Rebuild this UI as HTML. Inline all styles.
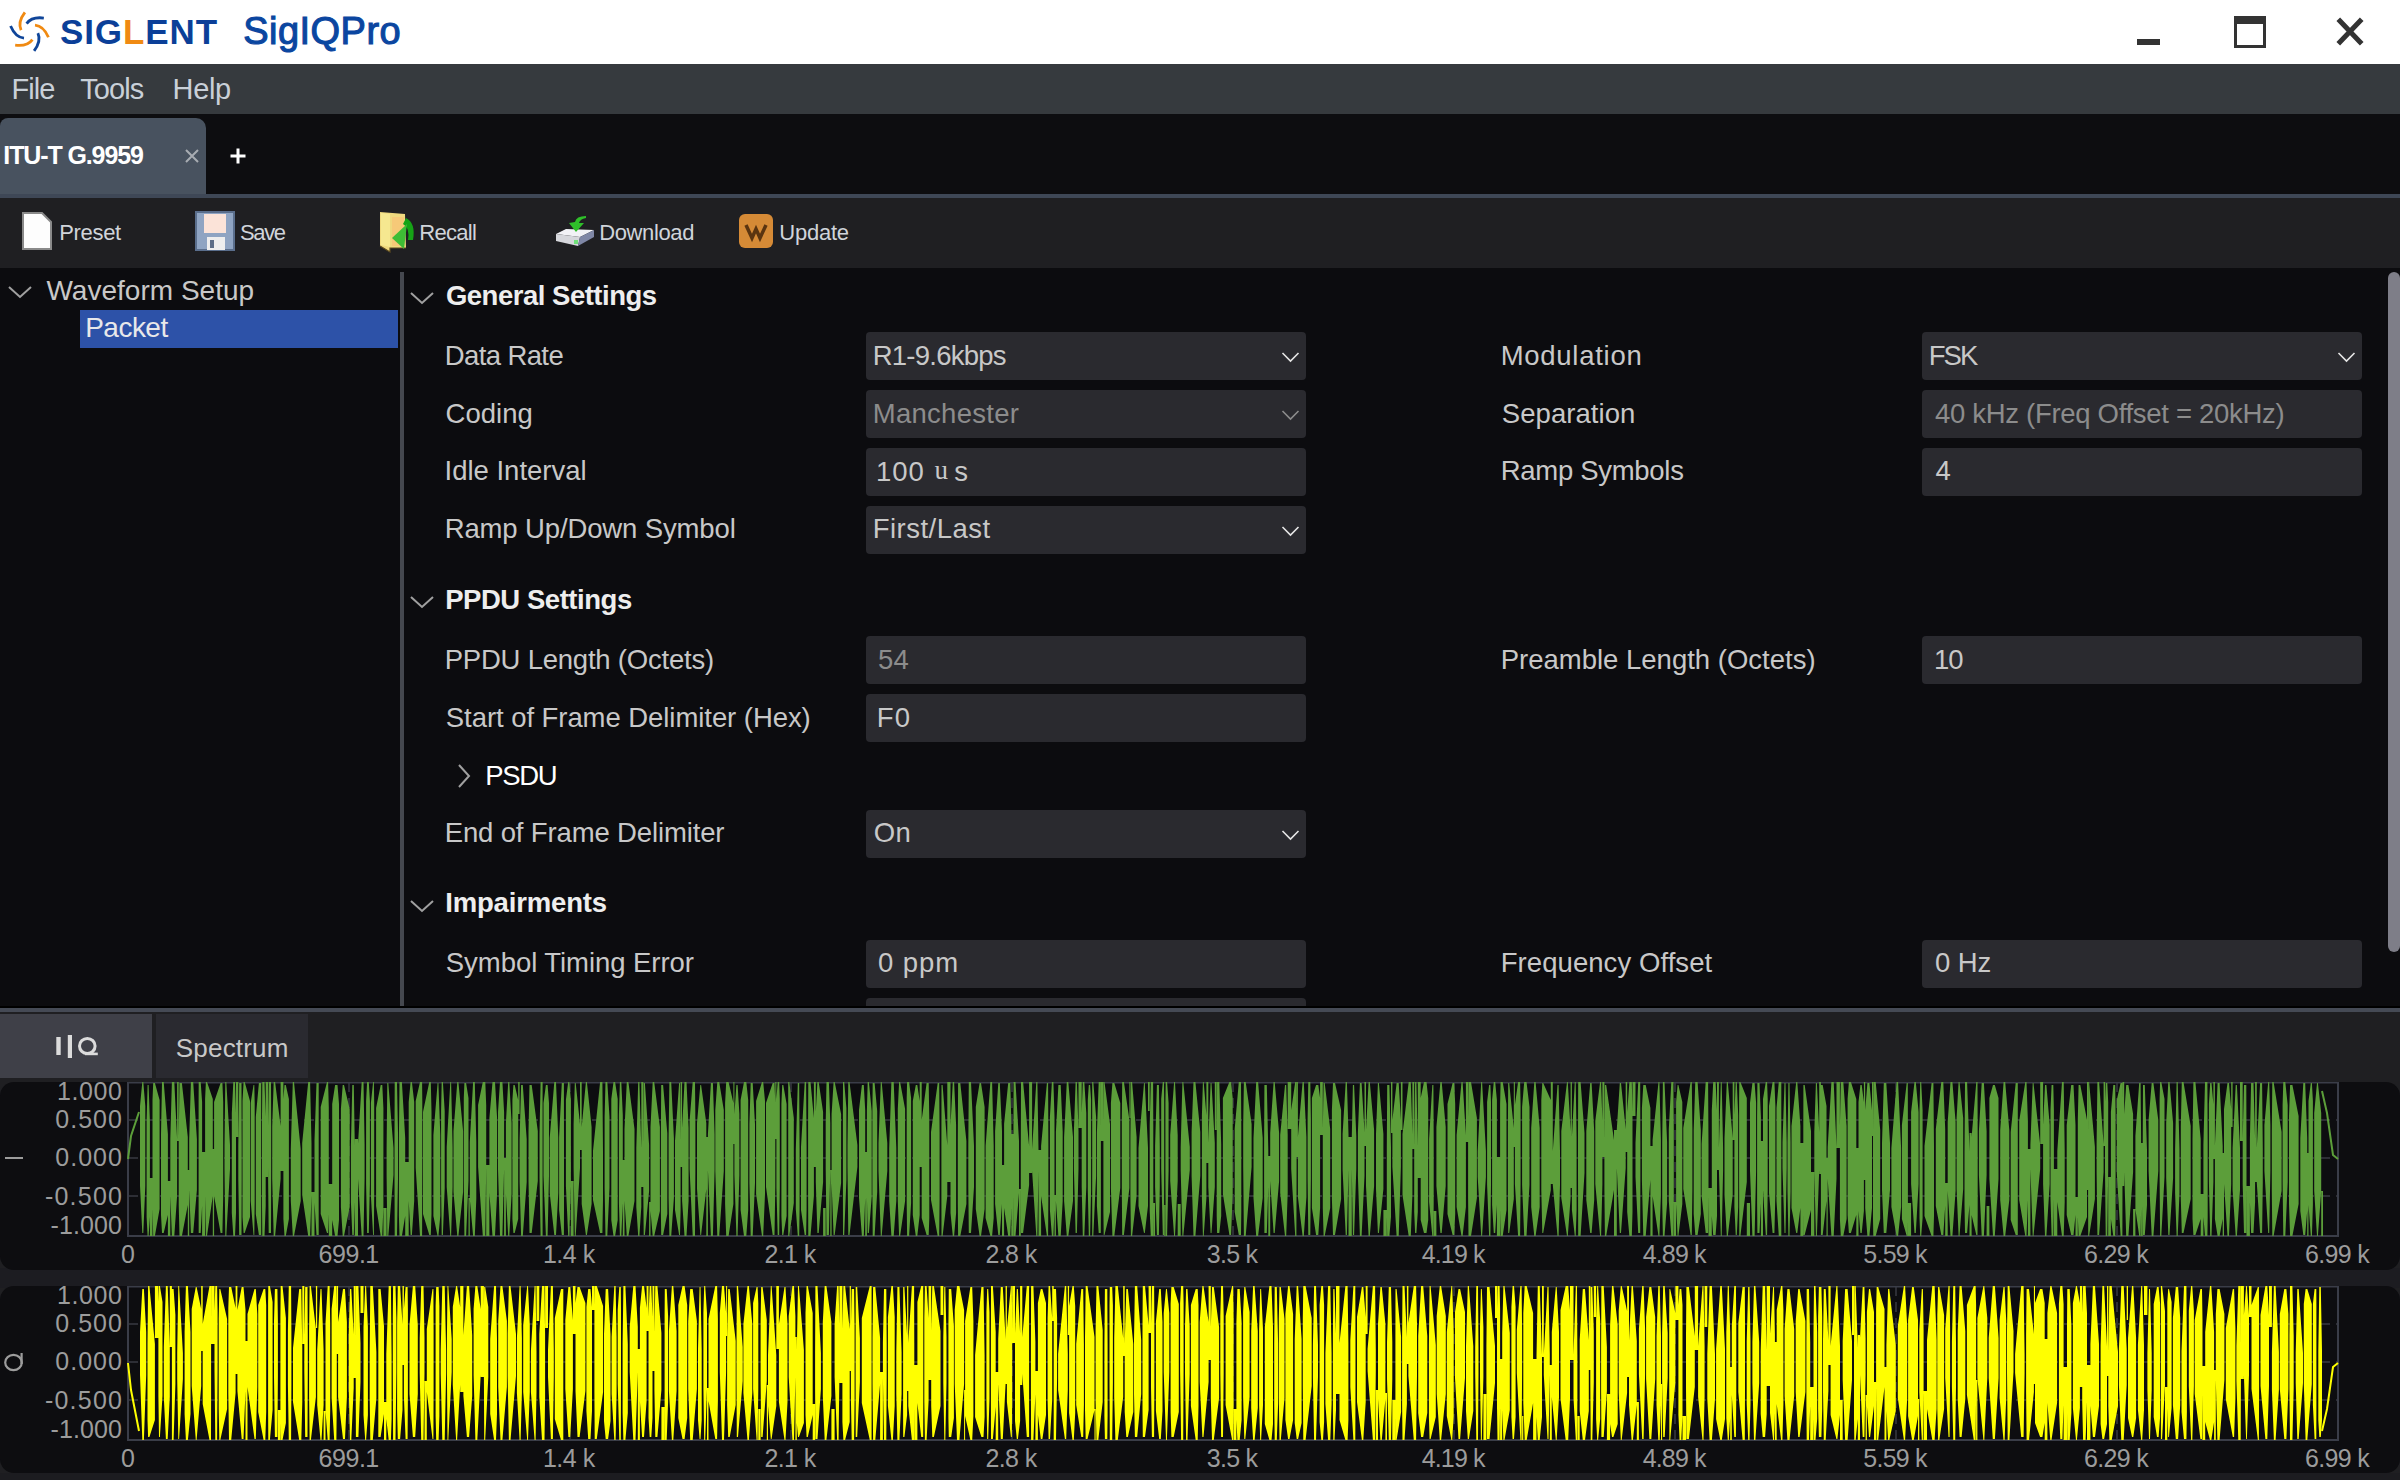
<!DOCTYPE html><html><head><meta charset="utf-8"><style>
html,body{margin:0;padding:0;width:2400px;height:1480px;overflow:hidden;background:#0c0c0f;}
body{position:relative;font-family:"Liberation Sans",sans-serif;}
.t{position:absolute;white-space:pre;}
.r{position:absolute;}
svg{position:absolute;left:0;top:0;}
</style></head><body>
<div class="r" style="left:0px;top:0px;width:2400px;height:64px;background:#ffffff;"></div>
<svg width="64" height="64" style="left:0;top:0"><g transform="translate(29.5,31.6)"><path d="M -8.4 -1.5 Q -12 -9.4 -4.6 -19.2" transform="rotate(0)" stroke="#f08a12" stroke-width="2.8" fill="none" stroke-linecap="butt"/><path d="M -8.4 -1.5 Q -12 -9.4 -4.6 -19.2" transform="rotate(60)" stroke="#0f4599" stroke-width="2.8" fill="none" stroke-linecap="butt"/><path d="M -8.4 -1.5 Q -12 -9.4 -4.6 -19.2" transform="rotate(120)" stroke="#f08a12" stroke-width="2.8" fill="none" stroke-linecap="butt"/><path d="M -8.4 -1.5 Q -12 -9.4 -4.6 -19.2" transform="rotate(180)" stroke="#0f4599" stroke-width="2.8" fill="none" stroke-linecap="butt"/><path d="M -8.4 -1.5 Q -12 -9.4 -4.6 -19.2" transform="rotate(240)" stroke="#f08a12" stroke-width="2.8" fill="none" stroke-linecap="butt"/><path d="M -8.4 -1.5 Q -12 -9.4 -4.6 -19.2" transform="rotate(300)" stroke="#0f4599" stroke-width="2.8" fill="none" stroke-linecap="butt"/></g></svg>
<div class="t" style="left:60px;top:14.4px;font-size:35px;line-height:35px;font-weight:bold;letter-spacing:0.9px;color:#0b3f98">SIG<span style="color:#f08a12">L</span>ENT</div>
<div class="t" style="left:243.3px;top:11.8px;font-size:38px;line-height:38px;color:#0b46a0;letter-spacing:0.45px;-webkit-text-stroke:1.1px #0b46a0;">SigIQPro</div>
<div class="r" style="left:2137px;top:39px;width:23px;height:6px;background:#333333;"></div>
<div class="r" style="left:2234px;top:16px;width:26px;height:21px;border:3px solid #333;border-top-width:8px;"></div>
<svg width="2400" height="64" style="left:0;top:0"><path d="M2340 21 L2360 42 M2360 21 L2340 42" stroke="#333" stroke-width="5" stroke-linecap="square"/></svg>
<div class="r" style="left:0px;top:64px;width:2400px;height:50px;background:#363a3e;"></div>
<div class="t" style="left:11.6px;top:75.4px;font-size:29px;line-height:29px;color:#c9d0d8;letter-spacing:-1.02px;">File</div>
<div class="t" style="left:80.3px;top:75.4px;font-size:29px;line-height:29px;color:#c9d0d8;letter-spacing:-0.93px;">Tools</div>
<div class="t" style="left:172.6px;top:75.4px;font-size:29px;line-height:29px;color:#c9d0d8;letter-spacing:-0.35px;">Help</div>
<div class="r" style="left:0px;top:114px;width:2400px;height:80px;background:#0d0d10;"></div>
<div class="r" style="left:0px;top:118px;width:206px;height:76px;background:#48525f;border-radius:8px 10px 0 0;"></div>
<div class="t" style="left:3.3px;top:143.0px;font-size:25px;line-height:25px;color:#ffffff;font-weight:bold;letter-spacing:-1.11px;">ITU-T G.9959</div>
<svg width="2400" height="200" style="left:0;top:0"><path d="M186 150 L198 162 M198 150 L186 162" stroke="#a8acb2" stroke-width="2"/><path d="M230.5 156 L245.5 156 M238 148.5 L238 163.5" stroke="#ffffff" stroke-width="3"/></svg>
<div class="r" style="left:0px;top:194px;width:2400px;height:4px;background:#3e4756;"></div>
<div class="r" style="left:0px;top:198px;width:2400px;height:70px;background:#1f1f22;"></div>
<svg width="2400" height="270" style="left:0;top:0"><path d="M23 213 L42 213 L51 222 L51 249 L23 249 Z" fill="#fdfdfd" stroke="#8a8a8a" stroke-width="2"/><rect x="196" y="212" width="38" height="38" fill="#8fa4c2"/><rect x="196" y="212" width="38" height="38" fill="none" stroke="#5a6e8c" stroke-width="2"/><rect x="204" y="214" width="22" height="19" fill="#fbe3d8"/><rect x="207" y="237" width="18" height="13" fill="#eeeeee"/><rect x="210" y="240" width="4" height="8" fill="#5d6e88"/><path d="M380 212 L405 214 L406 248 L390 248 L390 252 L380 246 Z" fill="#efd97e"/><path d="M381 213 L390 214 L390 247 L381 245 Z" fill="#f6e890"/><path d="M392 217 L404 217 L404 246 L392 246 Z" fill="#f6c978"/><path d="M380 246 L390 252 L390 248 L406 248" stroke="#5d4b20" stroke-width="1.2" fill="none"/><path d="M406 218 Q416 223 413 240 L408 240 Q410 228 403 224 Z" fill="#16a316"/><path d="M392 238 L407 224 L404 249 Z" fill="#3ebd35"/><path d="M556 234 L566 229 L594 230 L580 237 Z" fill="#f2f2f6"/><path d="M556 234 L580 237 L578 246 L556 241 Z" fill="#d6d7dc"/><path d="M580 237 L594 230 L594 237 L578 246 Z" fill="#7f87a6"/><rect x="574" y="240" width="4" height="4" fill="#70e07a"/><path d="M586 216 Q576 216 575 222 L569 223 L576 232 L584 223 L579 223 Q580 219 586 218 Z" fill="#2fbf2a"/><rect x="739" y="214" width="34" height="34" rx="6" fill="#d58a36"/><path d="M746 225 L752 238 L756 229 L760 238 L766 225" stroke="#5a3410" stroke-width="3.5" fill="none"/></svg>
<div class="t" style="left:59.2px;top:222.4px;font-size:22px;line-height:22px;color:#d0d4da;letter-spacing:-0.32px;">Preset</div>
<div class="t" style="left:240.0px;top:222.4px;font-size:22px;line-height:22px;color:#d0d4da;letter-spacing:-1.39px;">Save</div>
<div class="t" style="left:419.2px;top:222.4px;font-size:22px;line-height:22px;color:#d0d4da;letter-spacing:-0.67px;">Recall</div>
<div class="t" style="left:599.2px;top:222.4px;font-size:22px;line-height:22px;color:#d0d4da;letter-spacing:-0.37px;">Download</div>
<div class="t" style="left:779.3px;top:222.4px;font-size:22px;line-height:22px;color:#d0d4da;letter-spacing:-0.25px;">Update</div>
<div class="r" style="left:0px;top:268px;width:2400px;height:738px;background:#0c0c0f;"></div>
<svg width="2400" height="1010" style="left:0;top:0"><path d="M9 287 L20 297 L31 287" stroke="#a0a0a0" stroke-width="2" fill="none"/><path d="M411 293 L422 303 L433 293" stroke="#a0a0a0" stroke-width="2" fill="none"/><path d="M411 597 L422 607 L433 597" stroke="#a0a0a0" stroke-width="2" fill="none"/><path d="M411 901 L422 911 L433 901" stroke="#a0a0a0" stroke-width="2" fill="none"/><path d="M459 765 L469 776 L459 787" stroke="#a0a0a0" stroke-width="2" fill="none"/></svg>
<div class="t" style="left:46.4px;top:276.6px;font-size:28px;line-height:28px;color:#c8c8c8;letter-spacing:0.02px;">Waveform Setup</div>
<div class="r" style="left:80px;top:310px;width:318px;height:38px;background:#2d52a8;"></div>
<div class="t" style="left:85.2px;top:313.9px;font-size:28px;line-height:28px;color:#e8e8ea;letter-spacing:-0.52px;">Packet</div>
<div class="r" style="left:400px;top:272px;width:4px;height:734px;background:#45484f;"></div>
<div class="t" style="left:445.9px;top:281.7px;font-size:27.5px;line-height:27.5px;color:#eeeeee;font-weight:bold;letter-spacing:-0.49px;">General Settings</div>
<div class="t" style="left:444.7px;top:341.7px;font-size:27.5px;line-height:27.5px;color:#c8c8c8;letter-spacing:-0.60px;">Data Rate</div>
<div class="r" style="left:866px;top:332px;width:440px;height:48px;background:#2a2a2f;border-radius:4px;"></div>
<div class="t" style="left:872.7px;top:341.7px;font-size:27.5px;line-height:27.5px;color:#c8c8c8;letter-spacing:-0.76px;">R1-9.6kbps</div>
<svg width="24" height="16" style="left:1281px;top:351px"><path d="M1.5 2 L9.5 10 L17.5 2" stroke="#e6e6e6" stroke-width="1.6" fill="none"/></svg>
<div class="t" style="left:1500.7px;top:341.7px;font-size:27.5px;line-height:27.5px;color:#c8c8c8;letter-spacing:0.72px;">Modulation</div>
<div class="r" style="left:1922px;top:332px;width:440px;height:48px;background:#2a2a2f;border-radius:4px;"></div>
<div class="t" style="left:1928.7px;top:341.7px;font-size:27.5px;line-height:27.5px;color:#c8c8c8;letter-spacing:-1.96px;">FSK</div>
<svg width="24" height="16" style="left:2337px;top:351px"><path d="M1.5 2 L9.5 10 L17.5 2" stroke="#e6e6e6" stroke-width="1.6" fill="none"/></svg>
<div class="t" style="left:445.6px;top:399.7px;font-size:27.5px;line-height:27.5px;color:#c8c8c8;letter-spacing:0.00px;">Coding</div>
<div class="r" style="left:866px;top:390px;width:440px;height:48px;background:#2a2a2f;border-radius:4px;"></div>
<div class="t" style="left:872.7px;top:399.7px;font-size:27.5px;line-height:27.5px;color:#8c8c8c;letter-spacing:0.29px;">Manchester</div>
<svg width="24" height="16" style="left:1281px;top:409px"><path d="M1.5 2 L9.5 10 L17.5 2" stroke="#8c8c8c" stroke-width="1.6" fill="none"/></svg>
<div class="t" style="left:1501.8px;top:399.7px;font-size:27.5px;line-height:27.5px;color:#c8c8c8;letter-spacing:0.06px;">Separation</div>
<div class="r" style="left:1922px;top:390px;width:440px;height:48px;background:#2a2a2f;border-radius:4px;"></div>
<div class="t" style="left:1934.9px;top:399.7px;font-size:27.5px;line-height:27.5px;color:#8c8c8c;letter-spacing:-0.30px;">40 kHz (Freq Offset = 20kHz)</div>
<div class="t" style="left:444.5px;top:457.2px;font-size:27.5px;line-height:27.5px;color:#c8c8c8;letter-spacing:0.00px;">Idle Interval</div>
<div class="r" style="left:866px;top:448px;width:440px;height:48px;background:#2a2a2f;border-radius:4px;"></div>
<div class="t" style="left:875.9px;top:457.7px;font-size:27.5px;line-height:27.5px;color:#c8c8c8;letter-spacing:1.02px;">100</div>
<div class="t" style="left:934.5px;top:457px;font-size:27px;line-height:27px;color:#c8c8c8;font-family:'Liberation Serif',serif;">u</div>
<div class="t" style="left:954.2px;top:457.7px;font-size:27.5px;line-height:27.5px;color:#c8c8c8;letter-spacing:0.00px;">s</div>
<div class="t" style="left:1500.7px;top:457.2px;font-size:27.5px;line-height:27.5px;color:#c8c8c8;letter-spacing:-0.29px;">Ramp Symbols</div>
<div class="r" style="left:1922px;top:448px;width:440px;height:48px;background:#2a2a2f;border-radius:4px;"></div>
<div class="t" style="left:1935.4px;top:457.2px;font-size:27.5px;line-height:27.5px;color:#c8c8c8;letter-spacing:0.00px;">4</div>
<div class="t" style="left:444.7px;top:515.0px;font-size:27.5px;line-height:27.5px;color:#c8c8c8;letter-spacing:-0.13px;">Ramp Up/Down Symbol</div>
<div class="r" style="left:866px;top:506px;width:440px;height:48px;background:#2a2a2f;border-radius:4px;"></div>
<div class="t" style="left:872.7px;top:515.0px;font-size:27.5px;line-height:27.5px;color:#c8c8c8;letter-spacing:0.49px;">First/Last</div>
<svg width="24" height="16" style="left:1281px;top:525px"><path d="M1.5 2 L9.5 10 L17.5 2" stroke="#e6e6e6" stroke-width="1.6" fill="none"/></svg>
<div class="t" style="left:444.7px;top:645.5px;font-size:27.5px;line-height:27.5px;color:#c8c8c8;letter-spacing:-0.22px;">PPDU Length (Octets)</div>
<div class="r" style="left:866px;top:636px;width:440px;height:48px;background:#2a2a2f;border-radius:4px;"></div>
<div class="t" style="left:877.9px;top:645.5px;font-size:27.5px;line-height:27.5px;color:#8c8c8c;letter-spacing:0.32px;">54</div>
<div class="t" style="left:1500.7px;top:645.5px;font-size:27.5px;line-height:27.5px;color:#c8c8c8;letter-spacing:0.00px;">Preamble Length (Octets)</div>
<div class="r" style="left:1922px;top:636px;width:440px;height:48px;background:#2a2a2f;border-radius:4px;"></div>
<div class="t" style="left:1933.9px;top:645.5px;font-size:27.5px;line-height:27.5px;color:#c8c8c8;letter-spacing:-0.92px;">10</div>
<div class="t" style="left:445.8px;top:703.7px;font-size:27.5px;line-height:27.5px;color:#c8c8c8;letter-spacing:-0.06px;">Start of Frame Delimiter (Hex)</div>
<div class="r" style="left:866px;top:694px;width:440px;height:48px;background:#2a2a2f;border-radius:4px;"></div>
<div class="t" style="left:876.7px;top:703.7px;font-size:27.5px;line-height:27.5px;color:#c8c8c8;letter-spacing:1.24px;">F0</div>
<div class="t" style="left:444.7px;top:819.2px;font-size:27.5px;line-height:27.5px;color:#c8c8c8;letter-spacing:-0.14px;">End of Frame Delimiter</div>
<div class="r" style="left:866px;top:810px;width:440px;height:48px;background:#2a2a2f;border-radius:4px;"></div>
<div class="t" style="left:873.7px;top:819.2px;font-size:27.5px;line-height:27.5px;color:#c8c8c8;letter-spacing:0.40px;">On</div>
<svg width="24" height="16" style="left:1281px;top:829px"><path d="M1.5 2 L9.5 10 L17.5 2" stroke="#e6e6e6" stroke-width="1.6" fill="none"/></svg>
<div class="t" style="left:445.8px;top:948.7px;font-size:27.5px;line-height:27.5px;color:#c8c8c8;letter-spacing:-0.05px;">Symbol Timing Error</div>
<div class="r" style="left:866px;top:940px;width:440px;height:48px;background:#2a2a2f;border-radius:4px;"></div>
<div class="t" style="left:877.9px;top:948.7px;font-size:27.5px;line-height:27.5px;color:#c8c8c8;letter-spacing:0.99px;">0 ppm</div>
<div class="t" style="left:1500.7px;top:948.7px;font-size:27.5px;line-height:27.5px;color:#c8c8c8;letter-spacing:0.07px;">Frequency Offset</div>
<div class="r" style="left:1922px;top:940px;width:440px;height:48px;background:#2a2a2f;border-radius:4px;"></div>
<div class="t" style="left:1934.9px;top:948.7px;font-size:27.5px;line-height:27.5px;color:#c8c8c8;letter-spacing:-0.03px;">0 Hz</div>
<div class="t" style="left:445.2px;top:585.5px;font-size:27.5px;line-height:27.5px;color:#eeeeee;font-weight:bold;letter-spacing:-0.46px;">PPDU Settings</div>
<div class="t" style="left:485.2px;top:761.7px;font-size:27.5px;line-height:27.5px;color:#ffffff;letter-spacing:-1.34px;">PSDU</div>
<div class="t" style="left:445.2px;top:889.2px;font-size:27.5px;line-height:27.5px;color:#eeeeee;font-weight:bold;letter-spacing:-0.16px;">Impairments</div>
<div class="r" style="left:866px;top:998px;width:440px;height:48px;background:#2a2a2f;border-radius:4px;"></div>
<div class="r" style="left:404px;top:1006px;width:1996px;height:2px;background:#0c0c0f;"></div>
<div class="r" style="left:2388px;top:272px;width:12px;height:680px;background:#7e7e88;border-radius:6px;"></div>
<div class="r" style="left:0px;top:1006px;width:2400px;height:2px;background:#000000;"></div>
<div class="r" style="left:0px;top:1008px;width:2400px;height:4px;background:#454a55;"></div>
<div class="r" style="left:0px;top:1012px;width:2400px;height:468px;background:#1f1f22;"></div>
<div class="r" style="left:0px;top:1014px;width:152px;height:64px;background:#3f4048;"></div>
<div class="r" style="left:156px;top:1014px;width:152px;height:64px;background:#2a2a30;"></div>
<svg width="120" height="1070" style="left:0;top:0"><rect x="56.3" y="1037" width="4.4" height="18" fill="#dcdcdc"/><rect x="67.8" y="1035" width="4.2" height="23" fill="#dcdcdc"/><ellipse cx="87.3" cy="1046" rx="7.8" ry="7.6" fill="none" stroke="#dcdcdc" stroke-width="3.0"/><rect x="85" y="1052.6" width="12.8" height="2.6" fill="#dcdcdc"/></svg>
<div class="t" style="left:175.8px;top:1034.7px;font-size:26px;line-height:26px;color:#c8c8c8;letter-spacing:0.19px;">Spectrum</div>
<div class="r" style="left:0px;top:1268px;width:2400px;height:20px;background:#1c1c21;"></div>
<div class="r" style="left:0px;top:1082px;width:2400px;height:188px;background:#0d0d10;border-radius:14px;"></div>
<div class="r" style="left:0;top:1082px;width:2400px;height:200px;">
<svg width="2400" height="200" style="left:0;top:0"><line x1="128" y1="38" x2="2338" y2="38" stroke="#2d2e35" stroke-width="2" stroke-dasharray="10 6"/><line x1="128" y1="76" x2="2338" y2="76" stroke="#2d2e35" stroke-width="2" stroke-dasharray="10 6"/><line x1="128" y1="114" x2="2338" y2="114" stroke="#2d2e35" stroke-width="2" stroke-dasharray="10 6"/><line x1="349" y1="0" x2="349" y2="154" stroke="#2d2e35" stroke-width="2" stroke-dasharray="10 6"/><line x1="570" y1="0" x2="570" y2="154" stroke="#2d2e35" stroke-width="2" stroke-dasharray="10 6"/><line x1="791" y1="0" x2="791" y2="154" stroke="#2d2e35" stroke-width="2" stroke-dasharray="10 6"/><line x1="1012" y1="0" x2="1012" y2="154" stroke="#2d2e35" stroke-width="2" stroke-dasharray="10 6"/><line x1="1233" y1="0" x2="1233" y2="154" stroke="#2d2e35" stroke-width="2" stroke-dasharray="10 6"/><line x1="1454" y1="0" x2="1454" y2="154" stroke="#2d2e35" stroke-width="2" stroke-dasharray="10 6"/><line x1="1675" y1="0" x2="1675" y2="154" stroke="#2d2e35" stroke-width="2" stroke-dasharray="10 6"/><line x1="1896" y1="0" x2="1896" y2="154" stroke="#2d2e35" stroke-width="2" stroke-dasharray="10 6"/><line x1="2117" y1="0" x2="2117" y2="154" stroke="#2d2e35" stroke-width="2" stroke-dasharray="10 6"/><rect x="128" y="0.5" width="2210" height="153.5" fill="none" stroke="#3a3d48" stroke-width="2"/><path d="M140.0 24L142.3 0L143.3 0L145.3 24L145.3 104L143.3 151L142.3 151L140.0 104zM146.6 39L147.6 3L148.6 3L149.9 39L149.9 135L148.6 154L147.6 154L146.6 135zM149.9 96L152.5 96L152.5 154L149.9 154zM152.5 18L153.2 1L154.9 1L159.6 18L159.6 127L154.9 154L153.2 154L152.5 127zM161.0 52L162.0 0L163.7 0L167.9 52L167.9 133L163.7 151L162.0 151L161.0 133zM167.9 99L170.3 99L170.3 154L167.9 154zM170.3 57L171.9 0L174.3 0L177.1 57L177.1 114L174.3 154L171.9 154L170.3 114zM177.1 0L178.7 0L178.7 59L177.1 59zM178.7 55L179.5 1L181.9 1L187.8 55L187.8 123L181.9 154L179.5 154L178.7 123zM187.8 88L189.2 88L189.2 154L187.8 154zM189.2 57L190.9 0L193.2 0L196.9 57L196.9 108L193.2 151L190.9 151L189.2 108zM198.6 20L198.7 0L200.7 0L202.1 20L202.1 124L200.7 151L198.7 151L198.6 124zM202.1 70L205.1 70L205.1 154L202.1 154zM205.1 17L205.9 0L207.0 0L212.8 17L212.8 114L207.0 154L205.9 154L205.1 114zM212.8 67L214.1 67L214.1 154L212.8 154zM214.1 20L220.6 1L222.4 1L223.2 20L223.2 114L222.4 151L220.6 151L214.1 114zM224.5 63L225.3 0L226.3 0L230.0 63L230.0 87L226.3 154L225.3 154L224.5 87zM231.8 31L233.3 0L235.0 0L236.0 31L236.0 131L235.0 154L233.3 154L231.8 131zM236.0 0L238.3 0L238.3 55L236.0 55zM238.3 64L239.2 1L241.5 1L241.7 64L241.7 97L241.5 153L239.2 153L238.3 97zM242.5 19L243.6 0L244.7 0L250.0 19L250.0 135L244.7 151L243.6 151L242.5 135zM250.7 21L253.5 3L254.3 3L254.7 21L254.7 119L254.3 153L253.5 153L250.7 119zM255.8 35L258.9 1L261.2 1L261.2 35L261.2 132L261.2 153L258.9 153L255.8 132zM262.0 34L262.3 0L264.5 0L265.7 34L265.7 124L264.5 154L262.3 154L262.0 124zM265.7 0L268.0 0L268.0 95L265.7 95zM268.0 44L268.7 0L271.0 0L271.2 44L271.2 86L271.0 151L268.7 151L268.0 86zM272.2 44L273.7 0L275.1 0L280.6 44L280.6 97L275.1 154L273.7 154L272.2 97zM280.6 0L283.4 0L283.4 89L280.6 89zM283.4 17L284.5 3L285.8 3L288.9 17L288.9 137L285.8 154L284.5 154L283.4 137zM290.8 67L292.8 0L294.0 0L300.7 67L300.7 119L294.0 154L292.8 154L290.8 119zM302.2 61L308.2 0L310.1 0L311.5 61L311.5 113L310.1 154L308.2 154L302.2 113zM311.5 110L314.5 110L314.5 154L311.5 154zM314.5 58L316.5 1L318.7 1L318.7 58L318.7 121L318.7 153L316.5 153L314.5 121zM320.7 25L327.0 0L328.1 0L328.8 25L328.8 132L328.1 151L327.0 151L320.7 132zM328.8 102L332.2 102L332.2 154L328.8 154zM332.2 22L335.1 3L337.5 3L339.0 22L339.0 138L337.5 154L335.1 154L332.2 138zM340.9 27L342.7 3L344.0 3L349.7 27L349.7 125L344.0 154L342.7 154L340.9 125zM350.9 64L352.3 3L353.8 3L354.8 64L354.8 120L353.8 153L352.3 153L350.9 120zM354.8 57L358.0 57L358.0 154L354.8 154zM358.0 62L361.7 0L363.5 0L364.6 62L364.6 97L363.5 154L361.7 154L358.0 97zM366.1 19L367.1 0L368.8 0L369.9 19L369.9 102L368.8 151L367.1 151L366.1 102zM370.9 21L373.1 0L373.9 0L374.2 21L374.2 114L373.9 153L373.1 153L370.9 114zM376.1 26L380.7 3L382.3 3L383.4 26L383.4 124L382.3 154L380.7 154L376.1 124zM383.4 126L386.6 126L386.6 154L383.4 154zM386.6 66L387.3 1L388.3 1L393.5 66L393.5 93L388.3 154L387.3 154L386.6 93zM394.5 51L394.7 0L397.0 0L398.0 51L398.0 96L397.0 154L394.7 154L394.5 96zM398.9 56L399.5 0L401.9 0L405.2 56L405.2 134L401.9 154L399.5 154L398.9 134zM405.2 80L408.7 80L408.7 154L405.2 154zM408.7 20L410.6 0L411.9 0L414.2 20L414.2 119L411.9 153L410.6 153L408.7 119zM415.7 19L420.0 0L422.1 0L422.3 19L422.3 86L422.1 154L420.0 154L415.7 86zM423.0 30L429.3 0L430.8 0L431.5 30L431.5 132L430.8 153L429.3 153L423.0 132zM433.4 53L437.6 1L438.4 1L440.3 53L440.3 134L438.4 154L437.6 154L433.4 134zM441.1 29L441.7 0L442.9 0L444.7 29L444.7 106L442.9 153L441.7 153L441.1 106zM446.7 65L450.3 0L451.1 0L452.6 65L452.6 105L451.1 154L450.3 154L446.7 105zM453.5 49L457.3 0L458.4 0L463.1 49L463.1 110L458.4 154L457.3 154L453.5 110zM463.8 16L464.4 1L466.1 1L468.5 16L468.5 99L466.1 154L464.4 154L463.8 99zM468.5 116L469.8 116L469.8 154L468.5 154zM469.8 60L473.1 0L474.8 0L476.3 60L476.3 117L474.8 154L473.1 154L469.8 117zM478.1 23L482.8 0L485.3 0L486.2 23L486.2 85L485.3 154L482.8 154L478.1 85zM486.2 83L489.4 83L489.4 154L486.2 154zM489.4 36L492.5 0L495.0 0L497.1 36L497.1 111L495.0 154L492.5 154L489.4 111zM498.0 30L500.0 0L502.4 0L504.1 30L504.1 87L502.4 154L500.0 154L498.0 87zM504.1 76L505.9 76L505.9 154L504.1 154zM505.9 41L508.2 0L509.3 0L511.6 41L511.6 112L509.3 154L508.2 154L505.9 112zM512.4 18L513.4 3L514.7 3L518.2 18L518.2 137L514.7 151L513.4 151L512.4 137zM518.2 0L519.6 0L519.6 32L518.2 32zM519.6 57L521.1 3L522.8 3L526.7 57L526.7 100L522.8 154L521.1 154L519.6 100zM528.5 49L529.5 3L531.7 3L537.8 49L537.8 99L531.7 151L529.5 151L528.5 99zM539.5 52L540.6 0L542.6 0L542.6 52L542.6 96L542.6 154L540.6 154L539.5 96zM543.5 21L545.9 3L547.6 3L549.0 21L549.0 94L547.6 154L545.9 154L543.5 94zM549.7 56L554.3 0L556.0 0L558.3 56L558.3 111L556.0 153L554.3 153L549.7 111zM559.1 55L561.8 1L563.9 1L564.0 55L564.0 128L563.9 153L561.8 153L559.1 128zM565.9 18L568.2 0L569.3 0L570.9 18L570.9 104L569.3 154L568.2 154L565.9 104zM570.9 99L573.6 99L573.6 154L570.9 154zM573.6 42L574.8 1L575.7 1L580.0 42L580.0 86L575.7 154L574.8 154L573.6 86zM580.0 0L581.7 0L581.7 68L580.0 68zM581.7 45L585.9 0L586.9 0L591.6 45L591.6 122L586.9 153L585.9 153L581.7 122zM593.0 69L600.1 0L602.4 0L603.0 69L603.0 118L602.4 151L600.1 151L593.0 118zM604.6 35L605.5 0L607.3 0L609.5 35L609.5 106L607.3 154L605.5 154L604.6 106zM611.3 17L613.5 0L615.1 0L617.7 17L617.7 138L615.1 154L613.5 154L611.3 138zM618.9 33L619.9 0L621.3 0L622.8 33L622.8 121L621.3 154L619.9 154L618.9 121zM622.8 78L624.5 78L624.5 154L622.8 154zM624.5 47L626.8 0L628.4 0L634.5 47L634.5 119L628.4 154L626.8 154L624.5 119zM636.3 66L638.2 0L639.4 0L641.3 66L641.3 125L639.4 154L638.2 154L636.3 125zM641.3 0L643.3 0L643.3 105L641.3 105zM643.3 63L643.7 1L644.9 1L649.1 63L649.1 109L644.9 153L643.7 153L643.3 109zM649.1 120L650.5 120L650.5 154L649.1 154zM650.5 45L652.7 0L654.2 0L659.9 45L659.9 129L654.2 154L652.7 154L650.5 129zM660.9 51L661.2 3L663.1 3L667.3 51L667.3 132L663.1 153L661.2 153L660.9 132zM668.6 56L669.4 0L671.2 0L673.9 56L673.9 116L671.2 154L669.4 154L668.6 116zM675.0 59L679.1 1L680.0 1L680.6 59L680.6 128L680.0 153L679.1 153L675.0 128zM680.6 0L682.1 0L682.1 85L680.6 85zM682.1 46L684.5 0L686.5 0L688.6 46L688.6 119L686.5 154L684.5 154L682.1 119zM689.6 39L692.7 0L695.0 0L695.4 39L695.4 87L695.0 154L692.7 154L689.6 87zM697.0 41L700.3 3L701.1 3L706.3 41L706.3 107L701.1 153L700.3 153L697.0 107zM706.3 55L707.9 55L707.9 154L706.3 154zM707.9 52L710.9 1L712.9 1L714.6 52L714.6 88L712.9 154L710.9 154L707.9 88zM715.3 28L717.3 0L719.2 0L723.8 28L723.8 89L719.2 154L717.3 154L715.3 89zM725.1 21L726.2 0L728.6 0L733.4 21L733.4 122L728.6 154L726.2 154L725.1 122zM733.4 0L734.4 0L734.4 62L733.4 62zM734.4 32L736.4 3L737.6 3L739.4 32L739.4 93L737.6 154L736.4 154L734.4 93zM740.6 18L744.0 0L746.3 0L748.2 18L748.2 128L746.3 154L744.0 154L740.6 128zM749.4 42L750.7 1L752.7 1L755.0 42L755.0 101L752.7 154L750.7 154L749.4 101zM756.1 19L762.0 0L763.2 0L765.0 19L765.0 112L763.2 154L762.0 154L756.1 112zM766.0 21L772.7 1L774.5 1L775.3 21L775.3 105L774.5 153L772.7 153L766.0 105zM775.3 0L776.4 0L776.4 57L775.3 57zM776.4 17L777.7 0L779.2 0L779.8 17L779.8 106L779.2 153L777.7 153L776.4 106zM781.4 22L782.2 3L783.3 3L786.6 22L786.6 134L783.3 153L782.2 153L781.4 134zM788.2 36L788.2 0L789.3 0L793.8 36L793.8 121L789.3 154L788.2 154L788.2 121zM795.8 67L797.8 1L799.2 1L799.6 67L799.6 127L799.2 154L797.8 154L795.8 127zM801.0 65L804.7 0L806.1 0L806.6 65L806.6 128L806.1 153L804.7 153L801.0 128zM808.1 36L808.3 0L810.5 0L813.9 36L813.9 114L810.5 154L808.3 154L808.1 114zM813.9 0L815.8 0L815.8 85L813.9 85zM815.8 30L817.4 0L818.7 0L823.1 30L823.1 100L818.7 151L817.4 151L815.8 100zM823.1 126L825.7 126L825.7 154L823.1 154zM825.7 41L826.5 0L828.9 0L830.3 41L830.3 87L828.9 153L826.5 153L825.7 87zM830.3 88L831.6 88L831.6 154L830.3 154zM831.6 32L833.6 0L834.7 0L841.1 32L841.1 101L834.7 153L833.6 153L831.6 101zM842.9 26L843.0 0L844.2 0L846.4 26L846.4 98L844.2 153L843.0 153L842.9 98zM847.5 63L848.3 0L849.5 0L857.4 63L857.4 85L849.5 153L848.3 153L847.5 85zM859.0 28L861.9 3L863.8 3L865.2 28L865.2 116L863.8 154L861.9 154L859.0 116zM865.2 70L866.9 70L866.9 154L865.2 154zM866.9 29L867.7 0L868.9 0L871.7 29L871.7 115L868.9 151L867.7 151L866.9 115zM872.4 29L872.7 1L874.6 1L877.2 29L877.2 110L874.6 154L872.7 154L872.4 110zM878.5 61L880.8 0L881.7 0L887.3 61L887.3 89L881.7 154L880.8 154L878.5 89zM889.2 66L891.4 0L893.7 0L896.3 66L896.3 119L893.7 154L891.4 154L889.2 119zM897.8 27L899.1 0L900.1 0L905.1 27L905.1 119L900.1 154L899.1 154L897.8 119zM906.7 16L907.1 0L909.1 0L911.1 16L911.1 121L909.1 154L907.1 154L906.7 121zM912.8 19L915.8 3L917.3 3L919.7 19L919.7 133L917.3 154L915.8 154L912.8 133zM919.7 0L921.7 0L921.7 85L919.7 85zM921.7 38L926.6 1L928.7 1L929.3 38L929.3 136L928.7 153L926.6 153L921.7 136zM931.0 50L937.7 1L939.2 1L939.6 50L939.6 118L939.2 154L937.7 154L931.0 118zM941.4 63L941.5 3L942.6 3L947.3 63L947.3 114L942.6 154L941.5 154L941.4 114zM947.3 0L950.5 0L950.5 100L947.3 100zM950.5 43L952.8 0L954.1 0L956.1 43L956.1 131L954.1 154L952.8 154L950.5 131zM957.8 59L958.1 1L960.3 1L966.4 59L966.4 122L960.3 154L958.1 154L957.8 122zM968.3 64L968.8 0L971.0 0L974.0 64L974.0 105L971.0 151L968.8 151L968.3 105zM975.8 25L979.6 1L981.0 1L984.6 25L984.6 127L981.0 154L979.6 154L975.8 127zM985.6 64L990.4 0L992.1 0L993.7 64L993.7 136L992.1 154L990.4 154L985.6 136zM995.1 49L998.3 1L999.8 1L1002.0 49L1002.0 122L999.8 153L998.3 153L995.1 122zM1002.0 83L1004.1 83L1004.1 154L1002.0 154zM1004.1 42L1008.2 1L1010.3 1L1011.4 42L1011.4 126L1010.3 154L1008.2 154L1004.1 126zM1011.4 52L1013.4 52L1013.4 154L1011.4 154zM1013.4 59L1013.6 0L1015.5 0L1019.0 59L1019.0 111L1015.5 154L1013.6 154L1013.4 111zM1019.0 107L1020.8 107L1020.8 154L1019.0 154zM1020.8 64L1021.0 0L1023.1 0L1029.1 64L1029.1 103L1023.1 151L1021.0 151L1020.8 103zM1029.1 0L1032.1 0L1032.1 91L1029.1 91zM1032.1 67L1036.3 0L1037.4 0L1038.5 67L1038.5 89L1037.4 154L1036.3 154L1032.1 89zM1038.5 68L1041.1 68L1041.1 154L1038.5 154zM1041.1 64L1046.9 1L1048.1 1L1048.4 64L1048.4 114L1048.1 154L1046.9 154L1041.1 114zM1049.9 35L1051.9 0L1053.4 0L1054.5 35L1054.5 128L1053.4 154L1051.9 154L1049.9 128zM1054.5 113L1055.9 113L1055.9 154L1054.5 154zM1055.9 50L1058.4 3L1060.7 3L1062.7 50L1062.7 119L1060.7 154L1058.4 154L1055.9 119zM1064.1 55L1066.8 0L1068.3 0L1073.0 55L1073.0 119L1068.3 154L1066.8 154L1064.1 119zM1073.9 49L1075.6 0L1076.9 0L1078.5 49L1078.5 87L1076.9 151L1075.6 151L1073.9 87zM1078.5 0L1081.7 0L1081.7 46L1078.5 46zM1081.7 31L1082.8 0L1084.3 0L1086.3 31L1086.3 105L1084.3 154L1082.8 154L1081.7 105zM1087.8 18L1088.8 3L1090.1 3L1091.1 18L1091.1 108L1090.1 154L1088.8 154L1087.8 108zM1092.2 35L1092.2 0L1093.3 0L1096.1 35L1096.1 94L1093.3 154L1092.2 154L1092.2 94zM1096.9 51L1098.7 0L1100.8 0L1100.9 51L1100.9 124L1100.8 151L1098.7 151L1096.9 124zM1100.9 0L1103.4 0L1103.4 59L1100.9 59zM1103.4 42L1103.7 0L1104.5 0L1110.0 42L1110.0 130L1104.5 153L1103.7 153L1103.4 130zM1110.9 21L1112.4 1L1114.3 1L1120.3 21L1120.3 106L1114.3 154L1112.4 154L1110.9 106zM1121.8 38L1122.2 0L1123.9 0L1129.4 38L1129.4 106L1123.9 153L1122.2 153L1121.8 106zM1129.4 0L1130.4 0L1130.4 36L1129.4 36zM1130.4 55L1130.9 0L1132.1 0L1136.6 55L1136.6 114L1132.1 154L1130.9 154L1130.4 114zM1138.5 66L1144.0 1L1144.8 1L1148.0 66L1148.0 124L1144.8 151L1144.0 151L1138.5 124zM1148.0 0L1149.7 0L1149.7 29L1148.0 29zM1149.7 43L1150.8 0L1153.1 0L1153.3 43L1153.3 129L1153.1 154L1150.8 154L1149.7 129zM1153.3 121L1155.1 121L1155.1 154L1153.3 154zM1155.1 64L1156.9 3L1158.9 3L1159.8 64L1159.8 105L1158.9 153L1156.9 153L1155.1 105zM1161.2 17L1162.8 0L1164.0 0L1164.2 17L1164.2 87L1164.0 153L1162.8 153L1161.2 87zM1164.2 123L1165.4 123L1165.4 154L1164.2 154zM1165.4 21L1165.7 0L1167.1 0L1168.6 21L1168.6 89L1167.1 154L1165.7 154L1165.4 89zM1170.2 53L1174.1 0L1175.0 0L1177.7 53L1177.7 99L1175.0 154L1174.1 154L1170.2 99zM1177.7 122L1180.7 122L1180.7 154L1177.7 154zM1180.7 65L1182.4 0L1183.3 0L1189.8 65L1189.8 88L1183.3 154L1182.4 154L1180.7 88zM1191.6 50L1193.5 0L1195.4 0L1200.3 50L1200.3 94L1195.4 154L1193.5 154L1191.6 94zM1201.9 33L1202.9 0L1203.7 0L1206.4 33L1206.4 116L1203.7 154L1202.9 154L1201.9 116zM1206.4 0L1208.3 0L1208.3 81L1206.4 81zM1208.3 61L1210.6 1L1211.5 1L1214.8 61L1214.8 105L1211.5 151L1210.6 151L1208.3 105zM1214.8 0L1216.7 0L1216.7 48L1214.8 48zM1216.7 62L1217.1 0L1219.3 0L1221.2 62L1221.2 134L1219.3 151L1217.1 151L1216.7 134zM1222.9 16L1229.4 0L1231.1 0L1232.7 16L1232.7 112L1231.1 153L1229.4 153L1222.9 112zM1234.7 47L1238.8 0L1241.0 0L1241.3 47L1241.3 130L1241.0 153L1238.8 153L1234.7 130zM1243.2 42L1243.9 0L1245.7 0L1251.6 42L1251.6 85L1245.7 154L1243.9 154L1243.2 85zM1253.5 56L1256.2 0L1258.1 0L1262.7 56L1262.7 116L1258.1 154L1256.2 154L1253.5 116zM1264.1 68L1264.4 3L1266.8 3L1268.3 68L1268.3 105L1266.8 151L1264.4 151L1264.1 105zM1268.3 74L1270.2 74L1270.2 154L1268.3 154zM1270.2 51L1273.6 0L1274.7 0L1279.1 51L1279.1 99L1274.7 151L1273.6 151L1270.2 99zM1280.2 53L1285.0 3L1286.2 3L1287.7 53L1287.7 111L1286.2 154L1285.0 154L1280.2 111zM1287.7 0L1291.2 0L1291.2 47L1287.7 47zM1291.2 28L1295.2 0L1296.4 0L1296.6 28L1296.6 87L1296.4 154L1295.2 154L1291.2 87zM1296.6 0L1297.9 0L1297.9 75L1296.6 75zM1297.9 55L1302.6 0L1303.8 0L1306.4 55L1306.4 115L1303.8 154L1302.6 154L1297.9 115zM1307.6 37L1308.3 0L1310.3 0L1310.9 37L1310.9 96L1310.3 153L1308.3 153L1307.6 96zM1311.9 16L1316.1 3L1318.3 3L1320.1 16L1320.1 126L1318.3 153L1316.1 153L1311.9 126zM1320.1 0L1322.8 0L1322.8 53L1320.1 53zM1322.8 47L1323.6 1L1324.7 1L1330.2 47L1330.2 126L1324.7 154L1323.6 154L1322.8 126zM1331.9 28L1333.0 1L1335.0 1L1341.1 28L1341.1 117L1335.0 153L1333.0 153L1331.9 117zM1342.6 52L1345.7 0L1346.9 0L1348.5 52L1348.5 88L1346.9 153L1345.7 153L1342.6 88zM1348.5 55L1351.8 55L1351.8 154L1348.5 154zM1351.8 54L1352.9 3L1354.1 3L1356.3 54L1356.3 87L1354.1 153L1352.9 153L1351.8 87zM1357.9 50L1359.9 1L1361.6 1L1364.5 50L1364.5 94L1361.6 154L1359.9 154L1357.9 94zM1364.5 0L1366.0 0L1366.0 64L1364.5 64zM1366.0 48L1368.6 0L1369.8 0L1374.1 48L1374.1 104L1369.8 154L1368.6 154L1366.0 104zM1376.0 52L1377.9 1L1378.9 1L1383.4 52L1383.4 107L1378.9 151L1377.9 151L1376.0 107zM1383.4 128L1386.8 128L1386.8 154L1383.4 154zM1386.8 65L1387.2 3L1389.4 3L1391.0 65L1391.0 135L1389.4 154L1387.2 154L1386.8 135zM1391.0 0L1392.4 0L1392.4 51L1391.0 51zM1392.4 38L1396.6 1L1398.7 1L1400.9 38L1400.9 85L1398.7 154L1396.6 154L1392.4 85zM1400.9 0L1402.5 0L1402.5 48L1400.9 48zM1402.5 52L1408.7 0L1410.8 0L1412.4 52L1412.4 113L1410.8 154L1408.7 154L1402.5 113zM1412.4 0L1414.2 0L1414.2 67L1412.4 67zM1414.2 64L1415.1 0L1416.4 0L1417.8 64L1417.8 130L1416.4 151L1415.1 151L1414.2 130zM1417.8 0L1420.7 0L1420.7 96L1417.8 96zM1420.7 16L1424.0 0L1426.5 0L1428.2 16L1428.2 138L1426.5 151L1424.0 151L1420.7 138zM1429.1 57L1432.3 3L1433.4 3L1433.7 57L1433.7 120L1433.4 154L1432.3 154L1429.1 120zM1433.7 129L1436.4 129L1436.4 154L1433.7 154zM1436.4 45L1440.4 0L1441.7 0L1445.7 45L1445.7 104L1441.7 151L1440.4 151L1436.4 104zM1447.5 22L1452.6 1L1454.2 1L1455.2 22L1455.2 132L1454.2 153L1452.6 153L1447.5 132zM1456.6 53L1461.5 0L1462.6 0L1465.9 53L1465.9 125L1462.6 154L1461.5 154L1456.6 125zM1465.9 0L1468.1 0L1468.1 60L1465.9 60zM1468.1 36L1468.5 0L1471.0 0L1476.9 36L1476.9 116L1471.0 154L1468.5 154L1468.1 116zM1477.7 69L1481.2 0L1482.1 0L1485.9 69L1485.9 95L1482.1 154L1481.2 154L1477.7 95zM1487.1 20L1489.1 3L1490.4 3L1491.0 20L1491.0 103L1490.4 154L1489.1 154L1487.1 103zM1492.1 18L1493.8 0L1495.2 0L1496.9 18L1496.9 123L1495.2 151L1493.8 151L1492.1 123zM1496.9 75L1500.1 75L1500.1 154L1496.9 154zM1500.1 22L1500.6 0L1502.7 0L1506.5 22L1506.5 128L1502.7 154L1500.6 154L1500.1 128zM1507.9 46L1508.2 1L1509.2 1L1513.8 46L1513.8 117L1509.2 151L1508.2 151L1507.9 117zM1513.8 0L1514.9 0L1514.9 65L1513.8 65zM1514.9 23L1518.1 0L1520.1 0L1520.6 23L1520.6 102L1520.1 154L1518.1 154L1514.9 102zM1522.1 25L1524.2 0L1526.5 0L1529.5 25L1529.5 103L1526.5 154L1524.2 154L1522.1 103zM1531.2 46L1534.3 0L1535.6 0L1539.7 46L1539.7 125L1535.6 154L1534.3 154L1531.2 125zM1541.3 18L1542.3 1L1543.2 1L1550.8 18L1550.8 108L1543.2 151L1542.3 151L1541.3 108zM1550.8 0L1552.8 0L1552.8 102L1550.8 102zM1552.8 69L1557.5 3L1558.6 3L1560.0 69L1560.0 103L1558.6 154L1557.5 154L1552.8 103zM1561.3 49L1567.0 0L1567.8 0L1570.6 49L1570.6 116L1567.8 154L1567.0 154L1561.3 116zM1570.6 0L1571.9 0L1571.9 106L1570.6 106zM1571.9 55L1574.8 0L1575.7 0L1576.6 55L1576.6 128L1575.7 154L1574.8 154L1571.9 128zM1578.0 51L1578.2 0L1580.6 0L1584.5 51L1584.5 91L1580.6 154L1578.2 154L1578.0 91zM1586.3 49L1590.2 1L1591.6 1L1594.2 49L1594.2 118L1591.6 151L1590.2 151L1586.3 118zM1595.3 39L1600.1 0L1601.1 0L1602.4 39L1602.4 102L1601.1 154L1600.1 154L1595.3 102zM1602.4 0L1604.4 0L1604.4 75L1602.4 75zM1604.4 58L1604.9 3L1606.2 3L1614.0 58L1614.0 108L1606.2 154L1604.9 154L1604.4 108zM1614.0 48L1616.8 48L1616.8 154L1614.0 154zM1616.8 47L1619.8 1L1621.0 1L1625.7 47L1625.7 86L1621.0 151L1619.8 151L1616.8 86zM1625.7 0L1627.2 0L1627.2 70L1625.7 70zM1627.2 30L1629.4 0L1631.8 0L1632.5 30L1632.5 130L1631.8 154L1629.4 154L1627.2 130zM1632.5 0L1635.5 0L1635.5 34L1632.5 34zM1635.5 61L1638.2 0L1640.2 0L1640.4 61L1640.4 95L1640.2 151L1638.2 151L1635.5 95zM1641.9 26L1643.3 3L1645.7 3L1650.4 26L1650.4 98L1645.7 154L1643.3 154L1641.9 98zM1650.4 64L1652.6 64L1652.6 154L1650.4 154zM1652.6 58L1658.5 0L1659.4 0L1660.9 58L1660.9 114L1659.4 154L1658.5 154L1652.6 114zM1662.2 60L1662.9 0L1664.5 0L1667.1 60L1667.1 121L1664.5 154L1662.9 154L1662.2 121zM1668.8 47L1671.3 0L1673.4 0L1673.8 47L1673.8 119L1673.4 154L1671.3 154L1668.8 119zM1673.8 120L1676.1 120L1676.1 154L1673.8 154zM1676.1 20L1677.6 3L1678.4 3L1682.3 20L1682.3 122L1678.4 154L1677.6 154L1676.1 122zM1683.3 46L1690.6 0L1691.8 0L1692.4 46L1692.4 107L1691.8 153L1690.6 153L1683.3 107zM1693.7 48L1695.3 0L1697.6 0L1700.8 48L1700.8 132L1697.6 153L1695.3 153L1693.7 132zM1701.6 62L1705.7 0L1708.1 0L1708.5 62L1708.5 114L1708.1 151L1705.7 151L1701.6 114zM1708.5 106L1711.8 106L1711.8 154L1708.5 154zM1711.8 28L1713.2 0L1715.6 0L1717.0 28L1717.0 134L1715.6 153L1713.2 153L1711.8 134zM1717.0 0L1718.9 0L1718.9 88L1717.0 88zM1718.9 66L1720.8 0L1721.7 0L1723.1 66L1723.1 88L1721.7 154L1720.8 154L1718.9 88zM1724.5 56L1726.8 0L1727.8 0L1732.7 56L1732.7 113L1727.8 154L1726.8 154L1724.5 113zM1732.7 0L1734.4 0L1734.4 58L1732.7 58zM1734.4 33L1735.7 0L1736.8 0L1738.2 33L1738.2 125L1736.8 153L1735.7 153L1734.4 125zM1739.1 16L1739.3 0L1740.4 0L1746.8 16L1746.8 100L1740.4 154L1739.3 154L1739.1 100zM1746.8 121L1750.0 121L1750.0 154L1746.8 154zM1750.0 21L1752.4 1L1754.6 1L1756.1 21L1756.1 89L1754.6 154L1752.4 154L1750.0 89zM1757.1 35L1757.4 1L1759.5 1L1760.9 35L1760.9 121L1759.5 151L1757.4 151L1757.1 121zM1760.9 59L1763.0 59L1763.0 154L1760.9 154zM1763.0 17L1765.8 0L1767.1 0L1767.7 17L1767.7 108L1767.1 153L1765.8 153L1763.0 108zM1769.0 24L1772.6 0L1774.4 0L1775.4 24L1775.4 111L1774.4 151L1772.6 151L1769.0 111zM1776.5 26L1778.8 0L1781.3 0L1781.3 26L1781.3 119L1781.3 154L1778.8 154L1776.5 119zM1782.5 60L1784.5 1L1785.5 1L1786.7 60L1786.7 86L1785.5 151L1784.5 151L1782.5 86zM1787.5 60L1788.4 1L1789.5 1L1790.6 60L1790.6 110L1789.5 154L1788.4 154L1787.5 110zM1791.5 44L1796.2 0L1797.3 0L1800.4 44L1800.4 126L1797.3 151L1796.2 151L1791.5 126zM1800.4 61L1803.3 61L1803.3 154L1800.4 154zM1803.3 49L1803.4 3L1804.7 3L1811.0 49L1811.0 128L1804.7 153L1803.4 153L1803.3 128zM1811.0 90L1814.3 90L1814.3 154L1811.0 154zM1814.3 50L1815.9 1L1816.9 1L1819.2 50L1819.2 88L1816.9 154L1815.9 154L1814.3 88zM1819.2 0L1820.9 0L1820.9 92L1819.2 92zM1820.9 24L1820.9 3L1822.7 3L1826.5 24L1826.5 119L1822.7 153L1820.9 153L1820.9 119zM1826.5 76L1827.7 76L1827.7 154L1826.5 154zM1827.7 65L1831.4 0L1833.7 0L1836.5 65L1836.5 97L1833.7 154L1831.4 154L1827.7 97zM1836.5 0L1839.9 0L1839.9 66L1836.5 66zM1839.9 44L1840.8 0L1843.3 0L1846.6 44L1846.6 137L1843.3 154L1840.8 154L1839.9 137zM1847.6 17L1848.9 0L1850.9 0L1856.3 17L1856.3 133L1850.9 151L1848.9 151L1847.6 133zM1856.3 66L1858.5 66L1858.5 154L1856.3 154zM1858.5 20L1860.4 3L1861.7 3L1863.9 20L1863.9 129L1861.7 151L1860.4 151L1858.5 129zM1863.9 0L1865.2 0L1865.2 98L1863.9 98zM1865.2 28L1867.4 1L1869.4 1L1872.0 28L1872.0 126L1869.4 154L1867.4 154L1865.2 126zM1872.0 0L1873.0 0L1873.0 54L1872.0 54zM1873.0 48L1873.3 0L1875.7 0L1880.2 48L1880.2 137L1875.7 154L1873.3 154L1873.0 137zM1882.0 61L1883.8 1L1886.3 1L1890.0 61L1890.0 108L1886.3 151L1883.8 151L1882.0 108zM1891.4 66L1896.6 0L1898.1 0L1901.1 66L1901.1 125L1898.1 154L1896.6 154L1891.4 125zM1901.9 43L1906.7 1L1907.8 1L1907.9 43L1907.9 137L1907.8 154L1906.7 154L1901.9 137zM1907.9 121L1911.1 121L1911.1 154L1907.9 154zM1911.1 30L1914.5 0L1915.8 0L1918.6 30L1918.6 102L1915.8 151L1914.5 151L1911.1 102zM1919.5 28L1920.2 0L1921.2 0L1922.6 28L1922.6 136L1921.2 154L1920.2 154L1919.5 136zM1924.5 64L1931.6 1L1933.4 1L1934.0 64L1934.0 134L1933.4 154L1931.6 154L1924.5 134zM1935.8 47L1941.3 0L1943.3 0L1945.2 47L1945.2 124L1943.3 153L1941.3 153L1935.8 124zM1945.2 101L1947.7 101L1947.7 154L1945.2 154zM1947.7 40L1950.5 0L1952.4 0L1955.6 40L1955.6 109L1952.4 154L1950.5 154L1947.7 109zM1956.6 36L1958.6 0L1959.5 0L1963.2 36L1963.2 107L1959.5 154L1958.6 154L1956.6 107zM1964.5 69L1965.0 0L1967.1 0L1969.5 69L1969.5 123L1967.1 151L1965.0 151L1964.5 123zM1969.5 51L1971.6 51L1971.6 154L1969.5 154zM1971.6 55L1976.3 0L1977.5 0L1977.7 55L1977.7 133L1977.5 153L1976.3 153L1971.6 133zM1978.9 49L1981.7 1L1983.9 1L1986.6 49L1986.6 93L1983.9 154L1981.7 154L1978.9 93zM1986.6 124L1989.4 124L1989.4 154L1986.6 154zM1989.4 16L1993.0 3L1994.8 3L1998.5 16L1998.5 97L1994.8 154L1993.0 154L1989.4 97zM2000.2 48L2003.6 0L2005.2 0L2009.3 48L2009.3 118L2005.2 154L2003.6 154L2000.2 118zM2010.7 50L2015.7 1L2017.8 1L2017.8 50L2017.8 138L2017.8 153L2015.7 153L2010.7 138zM2019.2 39L2025.3 0L2026.5 0L2027.9 39L2027.9 118L2026.5 154L2025.3 154L2019.2 118zM2027.9 67L2030.4 67L2030.4 154L2027.9 154zM2030.4 63L2032.7 1L2033.5 1L2040.2 63L2040.2 87L2033.5 154L2032.7 154L2030.4 87zM2040.2 0L2043.1 0L2043.1 62L2040.2 62zM2043.1 43L2045.0 3L2046.4 3L2049.7 43L2049.7 102L2046.4 154L2045.0 154L2043.1 102zM2050.5 28L2051.6 3L2053.3 3L2053.9 28L2053.9 117L2053.3 154L2051.6 154L2050.5 117zM2053.9 87L2057.3 87L2057.3 154L2053.9 154zM2057.3 69L2062.0 0L2063.7 0L2064.7 69L2064.7 120L2063.7 154L2062.0 154L2057.3 120zM2066.7 43L2071.2 3L2073.5 3L2075.5 43L2075.5 133L2073.5 153L2071.2 153L2066.7 133zM2075.5 115L2077.8 115L2077.8 154L2075.5 154zM2077.8 38L2078.6 3L2080.3 3L2087.0 38L2087.0 135L2080.3 154L2078.6 154L2077.8 135zM2087.0 0L2088.1 0L2088.1 108L2087.0 108zM2088.1 65L2088.2 0L2089.1 0L2094.9 65L2094.9 117L2089.1 154L2088.2 154L2088.1 117zM2096.6 62L2097.4 0L2099.1 0L2103.6 62L2103.6 90L2099.1 153L2097.4 153L2096.6 90zM2103.6 0L2105.0 0L2105.0 64L2103.6 64zM2105.0 20L2105.7 1L2107.3 1L2108.2 20L2108.2 88L2107.3 154L2105.7 154L2105.0 88zM2108.2 95L2110.9 95L2110.9 154L2108.2 154zM2110.9 30L2113.3 3L2115.2 3L2115.6 30L2115.6 137L2115.2 154L2113.3 154L2110.9 137zM2116.8 18L2120.6 1L2122.4 1L2122.5 18L2122.5 91L2122.4 154L2120.6 154L2116.8 91zM2122.5 0L2124.2 0L2124.2 104L2122.5 104zM2124.2 32L2126.2 3L2128.4 3L2133.1 32L2133.1 90L2128.4 154L2126.2 154L2124.2 90zM2133.1 127L2135.4 127L2135.4 154L2133.1 154zM2135.4 54L2139.2 1L2140.6 1L2141.1 54L2141.1 127L2140.6 154L2139.2 154L2135.4 127zM2141.1 61L2142.7 61L2142.7 154L2141.1 154zM2142.7 68L2143.0 3L2144.8 3L2147.0 68L2147.0 123L2144.8 153L2143.0 153L2142.7 123zM2148.6 38L2151.7 1L2153.4 1L2158.3 38L2158.3 89L2153.4 154L2151.7 154L2148.6 89zM2159.6 17L2160.1 0L2161.3 0L2164.5 17L2164.5 95L2161.3 154L2160.1 154L2159.6 95zM2166.2 41L2168.3 0L2169.5 0L2173.1 41L2173.1 96L2169.5 153L2168.3 153L2166.2 96zM2175.1 67L2176.6 0L2177.7 0L2179.5 67L2179.5 111L2177.7 154L2176.6 154L2175.1 111zM2180.8 44L2181.8 0L2183.5 0L2190.7 44L2190.7 117L2183.5 151L2181.8 151L2180.8 117zM2192.5 57L2193.4 0L2195.4 0L2200.7 57L2200.7 137L2195.4 153L2193.4 153L2192.5 137zM2200.7 112L2203.4 112L2203.4 154L2200.7 154zM2203.4 63L2205.0 0L2207.4 0L2207.7 63L2207.7 135L2207.4 154L2205.0 154L2203.4 135zM2208.9 22L2210.2 1L2211.5 1L2213.4 22L2213.4 100L2211.5 154L2210.2 154L2208.9 100zM2213.4 0L2214.9 0L2214.9 77L2213.4 77zM2214.9 64L2217.6 1L2219.6 1L2222.7 64L2222.7 137L2219.6 154L2217.6 154L2214.9 137zM2222.7 71L2224.0 71L2224.0 154L2222.7 154zM2224.0 27L2227.5 1L2229.0 1L2231.2 27L2231.2 102L2229.0 154L2227.5 154L2224.0 102zM2231.2 0L2232.6 0L2232.6 45L2231.2 45zM2232.6 66L2235.7 3L2236.9 3L2240.0 66L2240.0 108L2236.9 154L2235.7 154L2232.6 108zM2240.0 0L2242.7 0L2242.7 59L2240.0 59zM2242.7 57L2244.0 3L2246.3 3L2246.5 57L2246.5 103L2246.3 151L2244.0 151L2242.7 103zM2246.5 104L2249.9 104L2249.9 154L2246.5 154zM2249.9 57L2251.1 1L2253.5 1L2255.1 57L2255.1 120L2253.5 151L2251.1 151L2249.9 120zM2255.1 0L2256.8 0L2256.8 100L2255.1 100zM2256.8 66L2260.1 1L2262.1 1L2262.8 66L2262.8 101L2262.1 151L2260.1 151L2256.8 101zM2264.4 43L2268.2 0L2269.2 0L2270.4 43L2270.4 89L2269.2 151L2268.2 151L2264.4 89zM2271.8 50L2272.3 0L2273.6 0L2281.6 50L2281.6 109L2273.6 154L2272.3 154L2271.8 109zM2282.6 23L2283.3 0L2285.3 0L2287.7 23L2287.7 100L2285.3 154L2283.3 154L2282.6 100zM2289.0 34L2290.1 3L2292.4 3L2298.6 34L2298.6 122L2292.4 154L2290.1 154L2289.0 122zM2300.3 56L2303.3 1L2305.2 1L2307.2 56L2307.2 129L2305.2 153L2303.3 153L2300.3 129zM2307.2 71L2308.5 71L2308.5 154L2307.2 154zM2308.5 19L2310.8 1L2311.9 1L2312.9 19L2312.9 123L2311.9 154L2310.8 154L2308.5 123zM2314.2 31L2317.0 1L2317.9 1L2321.2 31L2321.2 109L2317.9 154L2317.0 154L2314.2 109zM2321.2 109L2323.0 109L2323.0 154L2321.2 154z" fill="#5c9e3a"/><polyline points="128,77 131,54 139,30" fill="none" stroke="#5c9e3a" stroke-width="2"/><polyline points="2322,9 2327,31 2333,73 2338,77" fill="none" stroke="#5c9e3a" stroke-width="2"/></svg></div>
<div class="t" style="left:57.1px;top:1079.3px;font-size:25px;line-height:25px;color:#9c9c9c;letter-spacing:0.58px;">1.000</div>
<div class="t" style="left:55.3px;top:1107.1px;font-size:25px;line-height:25px;color:#9c9c9c;letter-spacing:1.02px;">0.500</div>
<div class="t" style="left:55.3px;top:1144.6px;font-size:25px;line-height:25px;color:#9c9c9c;letter-spacing:1.02px;">0.000</div>
<div class="t" style="left:44.9px;top:1183.5px;font-size:25px;line-height:25px;color:#9c9c9c;letter-spacing:1.24px;">-0.500</div>
<div class="t" style="left:50.6px;top:1212.8px;font-size:25px;line-height:25px;color:#9c9c9c;letter-spacing:0.10px;">-1.000</div>
<div class="t" style="left:121.0px;top:1241.8px;font-size:25px;line-height:25px;color:#9c9c9c;letter-spacing:0.00px;">0</div>
<div class="t" style="left:318.6px;top:1241.8px;font-size:25px;line-height:25px;color:#9c9c9c;letter-spacing:-0.47px;">699.1</div>
<div class="t" style="left:542.9px;top:1241.8px;font-size:25px;line-height:25px;color:#9c9c9c;letter-spacing:-0.48px;">1.4 k</div>
<div class="t" style="left:764.5px;top:1241.8px;font-size:25px;line-height:25px;color:#9c9c9c;letter-spacing:-0.64px;">2.1 k</div>
<div class="t" style="left:985.5px;top:1241.8px;font-size:25px;line-height:25px;color:#9c9c9c;letter-spacing:-0.64px;">2.8 k</div>
<div class="t" style="left:1206.8px;top:1241.8px;font-size:25px;line-height:25px;color:#9c9c9c;letter-spacing:-0.72px;">3.5 k</div>
<div class="t" style="left:1421.7px;top:1241.8px;font-size:25px;line-height:25px;color:#9c9c9c;letter-spacing:-0.84px;">4.19 k</div>
<div class="t" style="left:1642.7px;top:1241.8px;font-size:25px;line-height:25px;color:#9c9c9c;letter-spacing:-0.84px;">4.89 k</div>
<div class="t" style="left:1863.3px;top:1241.8px;font-size:25px;line-height:25px;color:#9c9c9c;letter-spacing:-0.76px;">5.59 k</div>
<div class="t" style="left:2084.1px;top:1241.8px;font-size:25px;line-height:25px;color:#9c9c9c;letter-spacing:-0.70px;">6.29 k</div>
<div class="t" style="left:2305.1px;top:1241.8px;font-size:25px;line-height:25px;color:#9c9c9c;letter-spacing:-0.70px;">6.99 k</div>
<div class="r" style="left:5px;top:1157px;width:18px;height:2px;background:#9c9c9c"></div>
<div class="r" style="left:0px;top:1286px;width:2400px;height:187px;background:#0d0d10;border-radius:14px;"></div>
<div class="r" style="left:0;top:1286px;width:2400px;height:200px;">
<svg width="2400" height="200" style="left:0;top:0"><line x1="128" y1="38" x2="2338" y2="38" stroke="#2d2e35" stroke-width="2" stroke-dasharray="10 6"/><line x1="128" y1="76" x2="2338" y2="76" stroke="#2d2e35" stroke-width="2" stroke-dasharray="10 6"/><line x1="128" y1="114" x2="2338" y2="114" stroke="#2d2e35" stroke-width="2" stroke-dasharray="10 6"/><line x1="349" y1="0" x2="349" y2="154" stroke="#2d2e35" stroke-width="2" stroke-dasharray="10 6"/><line x1="570" y1="0" x2="570" y2="154" stroke="#2d2e35" stroke-width="2" stroke-dasharray="10 6"/><line x1="791" y1="0" x2="791" y2="154" stroke="#2d2e35" stroke-width="2" stroke-dasharray="10 6"/><line x1="1012" y1="0" x2="1012" y2="154" stroke="#2d2e35" stroke-width="2" stroke-dasharray="10 6"/><line x1="1233" y1="0" x2="1233" y2="154" stroke="#2d2e35" stroke-width="2" stroke-dasharray="10 6"/><line x1="1454" y1="0" x2="1454" y2="154" stroke="#2d2e35" stroke-width="2" stroke-dasharray="10 6"/><line x1="1675" y1="0" x2="1675" y2="154" stroke="#2d2e35" stroke-width="2" stroke-dasharray="10 6"/><line x1="1896" y1="0" x2="1896" y2="154" stroke="#2d2e35" stroke-width="2" stroke-dasharray="10 6"/><line x1="2117" y1="0" x2="2117" y2="154" stroke="#2d2e35" stroke-width="2" stroke-dasharray="10 6"/><rect x="128" y="0.5" width="2210" height="153.5" fill="none" stroke="#3a3d48" stroke-width="2"/><path d="M140.0 46L142.3 3L143.9 3L146.2 46L146.2 89L143.9 154L142.3 154L140.0 89zM147.5 58L148.1 0L149.4 0L154.9 58L154.9 134L149.4 151L148.1 151L147.5 134zM154.9 0L158.4 0L158.4 52L154.9 52zM158.4 16L159.0 0L159.9 0L162.5 16L162.5 110L159.9 151L159.0 151L158.4 110zM163.8 61L165.9 0L167.7 0L169.8 61L169.8 111L167.7 153L165.9 153L163.8 111zM169.8 0L171.9 0L171.9 61L169.8 61zM171.9 29L171.9 3L173.6 3L175.4 29L175.4 98L173.6 154L171.9 154L171.9 98zM177.2 67L178.3 0L179.1 0L182.9 67L182.9 93L179.1 153L178.3 153L177.2 93zM184.6 46L185.9 0L187.9 0L190.5 46L190.5 128L187.9 154L185.9 154L184.6 128zM191.7 23L195.8 1L196.6 1L201.2 23L201.2 100L196.6 154L195.8 154L191.7 100zM201.2 0L202.7 0L202.7 65L201.2 65zM202.7 38L209.5 0L211.0 0L211.1 38L211.1 118L211.0 154L209.5 154L202.7 118zM211.1 0L214.5 0L214.5 58L211.1 58zM214.5 25L215.3 0L217.1 0L217.6 25L217.6 85L217.1 154L215.3 154L214.5 85zM218.7 33L219.3 3L220.3 3L227.1 33L227.1 123L220.3 154L219.3 154L218.7 123zM228.3 22L229.0 1L231.2 1L235.6 22L235.6 107L231.2 154L229.0 154L228.3 107zM235.6 0L237.4 0L237.4 88L235.6 88zM237.4 24L241.7 1L243.5 1L245.5 24L245.5 105L243.5 153L241.7 153L237.4 105zM245.5 55L247.5 55L247.5 154L245.5 154zM247.5 28L254.5 3L255.8 3L257.3 28L257.3 101L255.8 153L254.5 153L247.5 101zM258.2 19L263.6 3L265.3 3L266.2 19L266.2 126L265.3 154L263.6 154L258.2 126zM268.1 16L268.3 0L269.9 0L272.6 16L272.6 124L269.9 154L268.3 154L268.1 124zM274.0 35L274.9 3L277.4 3L277.9 35L277.9 91L277.4 151L274.9 151L274.0 91zM277.9 124L280.4 124L280.4 154L277.9 154zM280.4 32L280.7 0L282.5 0L285.9 32L285.9 137L282.5 154L280.7 154L280.4 137zM287.9 45L288.8 0L291.1 0L291.4 45L291.4 99L291.1 154L288.8 154L287.9 99zM293.0 62L299.2 3L301.3 3L302.3 62L302.3 116L301.3 154L299.2 154L293.0 116zM302.3 0L304.3 0L304.3 58L302.3 58zM304.3 50L305.2 1L307.5 1L307.8 50L307.8 85L307.5 151L305.2 151L304.3 85zM309.1 43L309.6 0L310.9 0L315.9 43L315.9 111L310.9 154L309.6 154L309.1 111zM315.9 0L317.2 0L317.2 42L315.9 42zM317.2 64L320.5 3L321.5 3L323.6 64L323.6 119L321.5 154L320.5 154L317.2 119zM323.6 125L325.5 125L325.5 154L323.6 154zM325.5 37L327.7 0L329.6 0L330.2 37L330.2 125L329.6 154L327.7 154L325.5 125zM331.6 23L334.2 0L336.4 0L336.8 23L336.8 112L336.4 154L334.2 154L331.6 112zM336.8 0L338.1 0L338.1 68L336.8 68zM338.1 36L343.0 3L345.0 3L346.9 36L346.9 111L345.0 153L343.0 153L338.1 111zM348.7 48L350.0 3L351.3 3L353.7 48L353.7 102L351.3 154L350.0 154L348.7 102zM353.7 0L355.7 0L355.7 92L353.7 92zM355.7 57L355.9 0L358.4 0L360.5 57L360.5 96L358.4 151L355.9 151L355.7 96zM360.5 0L363.5 0L363.5 27L360.5 27zM363.5 41L365.2 0L366.1 0L367.9 41L367.9 129L366.1 154L365.2 154L363.5 129zM369.7 66L370.3 0L372.8 0L376.4 66L376.4 112L372.8 154L370.3 154L369.7 112zM378.3 40L378.3 3L380.6 3L384.0 40L384.0 128L380.6 151L378.3 151L378.3 128zM384.0 116L386.3 116L386.3 154L384.0 154zM386.3 68L388.7 0L390.9 0L391.6 68L391.6 133L390.9 154L388.7 154L386.3 133zM392.8 32L393.1 0L395.5 0L396.4 32L396.4 86L395.5 154L393.1 154L392.8 86zM397.1 38L397.8 0L400.1 0L402.5 38L402.5 124L400.1 153L397.8 153L397.1 124zM402.5 0L403.9 0L403.9 79L402.5 79zM403.9 23L405.6 1L407.6 1L407.9 23L407.9 111L407.6 153L405.6 153L403.9 111zM409.5 39L412.9 0L415.2 0L417.8 39L417.8 108L415.2 151L412.9 151L409.5 108zM419.7 52L421.2 0L423.5 0L424.5 52L424.5 87L423.5 154L421.2 154L419.7 87zM424.5 95L426.8 95L426.8 154L424.5 154zM426.8 43L432.5 3L433.4 3L433.6 43L433.6 106L433.4 153L432.5 153L426.8 106zM435.6 20L436.2 1L438.6 1L439.4 20L439.4 130L438.6 154L436.2 154L435.6 130zM440.7 64L442.3 0L444.7 0L446.1 64L446.1 88L444.7 154L442.3 154L440.7 88zM446.9 53L447.5 0L448.3 0L451.7 53L451.7 86L448.3 154L447.5 154L446.9 86zM452.8 21L456.1 0L457.1 0L460.2 21L460.2 99L457.1 154L456.1 154L452.8 99zM460.2 0L463.4 0L463.4 106L460.2 106zM463.4 49L466.9 0L469.1 0L472.2 49L472.2 110L469.1 151L466.9 151L463.4 110zM473.6 23L475.4 0L477.3 0L480.7 23L480.7 89L477.3 154L475.4 154L473.6 89zM480.7 0L483.9 0L483.9 91L480.7 91zM483.9 21L484.2 1L485.2 1L488.3 21L488.3 91L485.2 154L484.2 154L483.9 91zM490.2 53L494.1 0L496.0 0L497.0 53L497.0 128L496.0 154L494.1 154L490.2 128zM498.2 35L500.5 0L502.4 0L506.9 35L506.9 101L502.4 154L500.5 154L498.2 101zM507.6 48L508.9 0L510.5 0L516.0 48L516.0 90L510.5 154L508.9 154L507.6 90zM516.9 52L519.6 0L520.6 0L521.9 52L521.9 107L520.6 154L519.6 154L516.9 107zM523.2 39L527.2 0L528.0 0L529.8 39L529.8 106L528.0 154L527.2 154L523.2 106zM530.9 65L534.6 0L535.6 0L536.5 65L536.5 106L535.6 154L534.6 154L530.9 106zM536.5 0L539.3 0L539.3 35L536.5 35zM539.3 48L542.0 0L544.5 0L545.1 48L545.1 111L544.5 154L542.0 154L539.3 111zM545.1 0L548.0 0L548.0 42L545.1 42zM548.0 64L550.9 0L552.9 0L553.8 64L553.8 91L552.9 153L550.9 153L548.0 91zM554.8 32L561.0 3L563.3 3L563.3 32L563.3 133L563.3 154L561.0 154L554.8 133zM565.3 34L568.4 1L570.2 1L572.9 34L572.9 103L570.2 151L568.4 151L565.3 103zM572.9 0L575.5 0L575.5 48L572.9 48zM575.5 17L577.5 1L579.6 1L585.4 17L585.4 105L579.6 151L577.5 151L575.5 105zM586.4 21L588.2 3L590.5 3L592.0 21L592.0 125L590.5 153L588.2 153L586.4 125zM592.0 0L594.4 0L594.4 24L592.0 24zM594.4 20L594.7 0L596.8 0L603.1 20L603.1 106L596.8 153L594.7 153L594.4 106zM604.0 48L605.7 3L608.1 3L610.5 48L610.5 135L608.1 153L605.7 153L604.0 135zM611.6 51L614.3 0L615.6 0L616.6 51L616.6 108L615.6 154L614.3 154L611.6 108zM617.7 24L619.3 1L620.8 1L621.0 24L621.0 98L620.8 154L619.3 154L617.7 98zM622.6 58L623.4 0L625.4 0L627.8 58L627.8 127L625.4 154L623.4 154L622.6 127zM629.7 41L633.3 0L635.5 0L637.8 41L637.8 86L635.5 154L633.3 154L629.7 86zM637.8 63L639.9 63L639.9 154L637.8 154zM639.9 22L642.1 0L644.0 0L646.6 22L646.6 115L644.0 151L642.1 151L639.9 115zM646.6 0L648.5 0L648.5 45L646.6 45zM648.5 31L649.7 0L651.3 0L652.5 31L652.5 132L651.3 151L649.7 151L648.5 132zM652.5 0L654.4 0L654.4 85L652.5 85zM654.4 47L655.3 0L657.4 0L661.4 47L661.4 104L657.4 151L655.3 151L654.4 104zM661.4 121L664.6 121L664.6 154L661.4 154zM664.6 30L664.8 3L666.7 3L668.1 30L668.1 116L666.7 154L664.8 154L664.6 116zM668.9 45L671.9 0L673.3 0L676.6 45L676.6 105L673.3 154L671.9 154L668.9 105zM678.3 19L682.5 0L684.6 0L687.2 19L687.2 132L684.6 153L682.5 153L678.3 132zM688.2 35L690.2 3L692.7 3L696.9 35L696.9 103L692.7 154L690.2 154L688.2 103zM698.0 63L699.6 1L700.5 1L701.7 63L701.7 134L700.5 153L699.6 153L698.0 134zM703.4 27L704.2 0L705.2 0L707.0 27L707.0 103L705.2 154L704.2 154L703.4 103zM707.0 102L708.5 102L708.5 154L707.0 154zM708.5 33L715.3 0L717.1 0L717.9 33L717.9 115L717.1 153L715.3 153L708.5 115zM719.8 27L722.0 0L724.0 0L726.1 27L726.1 86L724.0 154L722.0 154L719.8 86zM726.1 0L727.1 0L727.1 50L726.1 50zM727.1 55L728.2 3L729.7 3L735.7 55L735.7 119L729.7 151L728.2 151L727.1 119zM736.5 61L736.8 0L738.0 0L742.7 61L742.7 95L738.0 151L736.8 151L736.5 95zM743.4 38L747.5 0L748.9 0L752.3 38L752.3 107L748.9 154L747.5 154L743.4 107zM753.1 17L756.6 1L757.6 1L758.3 17L758.3 103L757.6 154L756.6 154L753.1 103zM758.3 123L760.6 123L760.6 154L758.3 154zM760.6 34L761.2 1L762.6 1L766.8 34L766.8 95L762.6 151L761.2 151L760.6 95zM766.8 99L768.0 99L768.0 154L766.8 154zM768.0 69L770.8 0L771.6 0L776.3 69L776.3 120L771.6 153L770.8 153L768.0 120zM776.3 0L778.9 0L778.9 63L776.3 63zM778.9 38L784.5 1L785.5 1L787.5 38L787.5 116L785.5 154L784.5 154L778.9 116zM788.7 30L792.4 0L794.0 0L795.4 30L795.4 91L794.0 154L792.4 154L788.7 91zM795.4 51L796.8 51L796.8 154L795.4 154zM796.8 64L798.0 0L798.9 0L803.9 64L803.9 137L798.9 151L798.0 151L796.8 137zM805.5 27L806.6 0L807.8 0L812.7 27L812.7 129L807.8 151L806.6 151L805.5 129zM812.7 118L815.1 118L815.1 154L812.7 154zM815.1 67L815.4 0L817.5 0L820.9 67L820.9 103L817.5 153L815.4 153L815.1 103zM822.8 36L824.7 0L826.4 0L831.4 36L831.4 110L826.4 154L824.7 154L822.8 110zM831.4 123L834.6 123L834.6 154L831.4 154zM834.6 38L837.1 0L838.6 0L839.4 38L839.4 91L838.6 154L837.1 154L834.6 91zM839.4 0L842.4 0L842.4 97L839.4 97zM842.4 43L843.4 0L845.1 0L849.7 43L849.7 136L845.1 154L843.4 154L842.4 136zM849.7 0L850.9 0L850.9 85L849.7 85zM850.9 41L851.7 3L854.1 3L854.6 41L854.6 113L854.1 154L851.7 154L850.9 113zM855.6 52L855.7 1L857.2 1L859.9 52L859.9 96L857.2 151L855.7 151L855.6 96zM861.8 32L869.8 0L871.6 0L871.6 32L871.6 117L871.6 154L869.8 154L861.8 117zM872.5 52L873.1 1L875.3 1L880.1 52L880.1 98L875.3 154L873.1 154L872.5 98zM880.1 86L882.9 86L882.9 154L880.1 154zM882.9 57L884.0 3L886.3 3L886.7 57L886.7 92L886.3 154L884.0 154L882.9 92zM887.9 31L891.4 0L892.9 0L894.7 31L894.7 120L892.9 154L891.4 154L887.9 120zM896.3 66L897.4 1L899.4 1L901.6 66L901.6 108L899.4 154L897.4 154L896.3 108zM903.1 49L903.2 1L904.4 1L907.1 49L907.1 129L904.4 151L903.2 151L903.1 129zM907.1 0L908.3 0L908.3 105L907.1 105zM908.3 57L911.9 0L914.1 0L914.3 57L914.3 120L914.1 154L911.9 154L908.3 120zM914.3 79L917.4 79L917.4 154L914.3 154zM917.4 16L921.2 0L923.2 0L923.3 16L923.3 117L923.2 151L921.2 151L917.4 117zM924.3 32L924.9 0L926.6 0L928.6 32L928.6 115L926.6 154L924.9 154L924.3 115zM928.6 0L931.2 0L931.2 94L928.6 94zM931.2 45L932.3 0L933.9 0L940.5 45L940.5 120L933.9 151L932.3 151L931.2 120zM940.5 0L943.3 0L943.3 29L940.5 29zM943.3 51L944.3 1L945.3 1L946.5 51L946.5 97L945.3 154L944.3 154L943.3 97zM948.4 40L948.8 3L951.2 3L953.9 40L953.9 132L951.2 151L948.8 151L948.4 132zM954.7 24L957.0 0L959.4 0L964.1 24L964.1 98L959.4 154L957.0 154L954.7 98zM964.1 104L965.1 104L965.1 154L964.1 154zM965.1 35L970.4 1L972.2 1L973.4 35L973.4 130L972.2 154L970.4 154L965.1 130zM975.1 69L981.4 1L983.5 1L984.6 69L984.6 131L983.5 151L981.4 151L975.1 131zM986.4 26L987.2 3L988.2 3L989.5 26L989.5 113L988.2 153L987.2 153L986.4 113zM990.9 46L991.0 0L992.9 0L995.7 46L995.7 121L992.9 153L991.0 153L990.9 121zM995.7 86L998.2 86L998.2 154L995.7 154zM998.2 53L1000.8 1L1002.8 1L1005.6 53L1005.6 98L1002.8 153L1000.8 153L998.2 98zM1005.6 0L1006.9 0L1006.9 98L1005.6 98zM1006.9 43L1010.9 0L1011.8 0L1012.2 43L1012.2 116L1011.8 151L1010.9 151L1006.9 116zM1012.2 0L1015.0 0L1015.0 57L1012.2 57zM1015.0 47L1016.8 3L1017.9 3L1020.1 47L1020.1 135L1017.9 153L1016.8 153L1015.0 135zM1020.1 0L1022.3 0L1022.3 99L1020.1 99zM1022.3 51L1026.8 0L1029.1 0L1029.1 51L1029.1 88L1029.1 151L1026.8 151L1022.3 88zM1030.9 56L1031.1 0L1033.4 0L1035.4 56L1035.4 108L1033.4 154L1031.1 154L1030.9 108zM1035.4 85L1037.9 85L1037.9 154L1035.4 154zM1037.9 17L1040.8 3L1042.4 3L1046.0 17L1046.0 129L1042.4 153L1040.8 153L1037.9 129zM1047.6 32L1048.6 0L1050.0 0L1052.2 32L1052.2 114L1050.0 153L1048.6 153L1047.6 114zM1052.2 0L1053.7 0L1053.7 35L1052.2 35zM1053.7 32L1053.7 3L1056.0 3L1057.1 32L1057.1 92L1056.0 154L1053.7 154L1053.7 92zM1058.1 68L1064.9 0L1066.2 0L1067.8 68L1067.8 104L1066.2 153L1064.9 153L1058.1 104zM1067.8 0L1069.1 0L1069.1 49L1067.8 49zM1069.1 20L1072.5 0L1073.8 0L1075.2 20L1075.2 127L1073.8 154L1072.5 154L1069.1 127zM1076.2 58L1081.3 3L1083.2 3L1083.9 58L1083.9 119L1083.2 151L1081.3 151L1076.2 119zM1085.0 51L1085.7 0L1087.5 0L1094.5 51L1094.5 124L1087.5 153L1085.7 153L1085.0 124zM1094.5 123L1095.6 123L1095.6 154L1094.5 154zM1095.6 44L1096.5 0L1098.3 0L1102.7 44L1102.7 116L1098.3 154L1096.5 154L1095.6 116zM1104.4 58L1104.9 3L1107.3 3L1107.6 58L1107.6 130L1107.3 153L1104.9 153L1104.4 130zM1109.5 19L1109.8 1L1112.2 1L1112.9 19L1112.9 97L1112.2 154L1109.8 154L1109.5 97zM1114.2 52L1115.4 0L1117.8 0L1123.2 52L1123.2 111L1117.8 154L1115.4 154L1114.2 111zM1123.2 0L1124.7 0L1124.7 70L1123.2 70zM1124.7 58L1126.3 3L1127.9 3L1133.3 58L1133.3 126L1127.9 151L1126.3 151L1124.7 126zM1134.0 54L1134.9 0L1137.2 0L1141.2 54L1141.2 108L1137.2 151L1134.9 151L1134.0 108zM1142.5 39L1142.8 0L1145.0 0L1148.6 39L1148.6 124L1145.0 151L1142.8 151L1142.5 124zM1148.6 0L1151.0 0L1151.0 47L1148.6 47zM1151.0 38L1151.9 0L1154.1 0L1154.4 38L1154.4 101L1154.1 151L1151.9 151L1151.0 101zM1155.9 36L1159.2 3L1160.8 3L1162.5 36L1162.5 125L1160.8 153L1159.2 153L1155.9 125zM1163.7 27L1166.0 3L1166.9 3L1169.3 27L1169.3 86L1166.9 154L1166.0 154L1163.7 86zM1170.6 18L1171.4 1L1173.7 1L1178.8 18L1178.8 126L1173.7 151L1171.4 151L1170.6 126zM1180.1 17L1181.1 0L1183.2 0L1183.6 17L1183.6 85L1183.2 154L1181.1 154L1180.1 85zM1185.0 40L1186.1 3L1187.5 3L1189.7 40L1189.7 88L1187.5 154L1186.1 154L1185.0 88zM1190.9 19L1195.7 3L1197.7 3L1198.5 19L1198.5 120L1197.7 154L1195.7 154L1190.9 120zM1199.7 36L1202.4 0L1203.5 0L1208.6 36L1208.6 96L1203.5 151L1202.4 151L1199.7 96zM1208.6 0L1210.8 0L1210.8 74L1208.6 74zM1210.8 41L1212.0 1L1213.8 1L1219.1 41L1219.1 112L1213.8 154L1212.0 154L1210.8 112zM1220.3 30L1221.1 0L1223.0 0L1223.7 30L1223.7 87L1223.0 151L1221.1 151L1220.3 87zM1225.6 30L1232.1 0L1233.1 0L1233.6 30L1233.6 119L1233.1 154L1232.1 154L1225.6 119zM1233.6 123L1236.4 123L1236.4 154L1233.6 154zM1236.4 36L1237.4 3L1239.7 3L1241.6 36L1241.6 134L1239.7 154L1237.4 154L1236.4 134zM1243.1 26L1244.3 1L1245.3 1L1249.6 26L1249.6 111L1245.3 153L1244.3 153L1243.1 111zM1251.2 45L1253.1 0L1254.6 0L1257.8 45L1257.8 122L1254.6 154L1253.1 154L1251.2 122zM1259.1 43L1260.2 3L1261.1 3L1263.0 43L1263.0 119L1261.1 154L1260.2 154L1259.1 119zM1264.8 41L1269.4 0L1271.5 0L1273.0 41L1273.0 138L1271.5 154L1269.4 154L1264.8 138zM1274.2 57L1274.7 1L1276.8 1L1278.1 57L1278.1 118L1276.8 154L1274.7 154L1274.2 118zM1278.8 33L1279.5 1L1280.8 1L1284.5 33L1284.5 112L1280.8 154L1279.5 154L1278.8 112zM1285.4 28L1288.1 0L1289.5 0L1293.1 28L1293.1 134L1289.5 153L1288.1 153L1285.4 134zM1294.7 53L1296.7 0L1298.1 0L1301.6 53L1301.6 137L1298.1 153L1296.7 153L1294.7 137zM1302.8 32L1303.3 0L1305.6 0L1311.7 32L1311.7 100L1305.6 154L1303.3 154L1302.8 100zM1312.9 59L1314.1 0L1316.0 0L1318.0 59L1318.0 91L1316.0 154L1314.1 154L1312.9 91zM1319.6 19L1321.3 0L1323.0 0L1324.1 19L1324.1 136L1323.0 154L1321.3 154L1319.6 136zM1325.4 67L1328.1 0L1330.3 0L1331.6 67L1331.6 118L1330.3 154L1328.1 154L1325.4 118zM1332.9 48L1333.3 3L1334.5 3L1336.0 48L1336.0 124L1334.5 154L1333.3 154L1332.9 124zM1336.0 0L1339.5 0L1339.5 108L1336.0 108zM1339.5 57L1345.4 0L1347.6 0L1348.4 57L1348.4 134L1347.6 154L1345.4 154L1339.5 134zM1350.3 54L1353.4 0L1355.3 0L1355.5 54L1355.5 101L1355.3 154L1353.4 154L1350.3 101zM1357.0 31L1361.9 1L1363.3 1L1365.7 31L1365.7 116L1363.3 154L1361.9 154L1357.0 116zM1365.7 0L1367.6 0L1367.6 48L1365.7 48zM1367.6 63L1372.9 0L1375.1 0L1375.8 63L1375.8 85L1375.1 154L1372.9 154L1367.6 85zM1375.8 104L1378.0 104L1378.0 154L1375.8 154zM1378.0 38L1380.4 1L1381.8 1L1385.4 38L1385.4 113L1381.8 154L1380.4 154L1378.0 113zM1385.4 107L1387.0 107L1387.0 154L1385.4 154zM1387.0 56L1388.8 1L1391.0 1L1392.3 56L1392.3 93L1391.0 154L1388.8 154L1387.0 93zM1392.3 114L1395.4 114L1395.4 154L1392.3 154zM1395.4 51L1395.5 3L1396.6 3L1401.1 51L1401.1 126L1396.6 154L1395.5 154L1395.4 126zM1402.1 51L1402.5 0L1404.5 0L1406.9 51L1406.9 118L1404.5 154L1402.5 154L1402.1 118zM1406.9 0L1408.4 0L1408.4 78L1406.9 78zM1408.4 37L1413.8 0L1416.1 0L1417.0 37L1417.0 90L1416.1 154L1413.8 154L1408.4 90zM1418.2 50L1421.1 0L1423.2 0L1427.3 50L1427.3 127L1423.2 151L1421.1 151L1418.2 127zM1428.9 59L1429.6 0L1430.6 0L1435.8 59L1435.8 131L1430.6 153L1429.6 153L1428.9 131zM1436.7 30L1439.8 0L1441.1 0L1445.8 30L1445.8 108L1441.1 154L1439.8 154L1436.7 108zM1446.8 46L1451.4 0L1452.2 0L1453.7 46L1453.7 130L1452.2 154L1451.4 154L1446.8 130zM1455.0 26L1458.5 3L1460.1 3L1465.0 26L1465.0 92L1460.1 153L1458.5 153L1455.0 92zM1466.0 60L1467.8 0L1468.9 0L1473.3 60L1473.3 125L1468.9 153L1467.8 153L1466.0 125zM1475.2 62L1476.3 0L1478.0 0L1478.5 62L1478.5 88L1478.0 154L1476.3 154L1475.2 88zM1480.0 41L1480.9 3L1481.8 3L1483.4 41L1483.4 91L1481.8 154L1480.9 154L1480.0 91zM1483.4 108L1486.4 108L1486.4 154L1483.4 154zM1486.4 60L1487.0 1L1489.5 1L1495.0 60L1495.0 97L1489.5 153L1487.0 153L1486.4 97zM1495.0 0L1497.0 0L1497.0 32L1495.0 32zM1497.0 23L1497.5 0L1499.6 0L1500.1 23L1500.1 121L1499.6 154L1497.5 154L1497.0 121zM1500.1 73L1502.2 73L1502.2 154L1500.1 154zM1502.2 47L1503.4 0L1504.5 0L1509.8 47L1509.8 124L1504.5 154L1503.4 154L1502.2 124zM1511.4 21L1512.6 0L1514.0 0L1515.6 21L1515.6 131L1514.0 153L1512.6 153L1511.4 131zM1516.8 44L1520.4 0L1521.6 0L1522.1 44L1522.1 87L1521.6 154L1520.4 154L1516.8 87zM1522.1 130L1523.3 130L1523.3 154L1522.1 154zM1523.3 27L1524.7 0L1526.7 0L1533.1 27L1533.1 117L1526.7 154L1524.7 154L1523.3 117zM1533.1 73L1536.5 73L1536.5 154L1533.1 154zM1536.5 69L1537.8 0L1539.7 0L1542.0 69L1542.0 131L1539.7 154L1537.8 154L1536.5 131zM1542.0 0L1543.8 0L1543.8 71L1542.0 71zM1543.8 68L1547.5 1L1548.5 1L1549.8 68L1549.8 89L1548.5 153L1547.5 153L1543.8 89zM1549.8 79L1551.8 79L1551.8 154L1549.8 154zM1551.8 46L1555.8 1L1556.7 1L1559.0 46L1559.0 111L1556.7 154L1555.8 154L1551.8 111zM1560.5 24L1565.7 0L1568.2 0L1570.0 24L1570.0 113L1568.2 154L1565.7 154L1560.5 113zM1570.0 0L1573.5 0L1573.5 74L1570.0 74zM1573.5 69L1575.8 0L1577.0 0L1577.4 69L1577.4 112L1577.0 154L1575.8 154L1573.5 112zM1577.4 130L1579.7 130L1579.7 154L1577.4 154zM1579.7 54L1582.8 3L1585.0 3L1588.8 54L1588.8 125L1585.0 154L1582.8 154L1579.7 125zM1588.8 0L1590.3 0L1590.3 84L1588.8 84zM1590.3 45L1590.7 1L1592.3 1L1593.8 45L1593.8 96L1592.3 154L1590.7 154L1590.3 96zM1593.8 0L1596.1 0L1596.1 31L1593.8 31zM1596.1 35L1597.2 0L1598.1 0L1600.2 35L1600.2 133L1598.1 154L1597.2 154L1596.1 133zM1601.1 61L1601.4 0L1603.7 0L1606.9 61L1606.9 105L1603.7 151L1601.4 151L1601.1 105zM1606.9 108L1610.1 108L1610.1 154L1606.9 154zM1610.1 39L1612.0 0L1613.4 0L1617.7 39L1617.7 138L1613.4 151L1612.0 151L1610.1 138zM1618.7 25L1620.8 0L1621.7 0L1627.1 25L1627.1 107L1621.7 154L1620.8 154L1618.7 107zM1627.1 0L1629.0 0L1629.0 91L1627.1 91zM1629.0 55L1631.6 0L1632.9 0L1636.8 55L1636.8 119L1632.9 154L1631.6 154L1629.0 119zM1636.8 116L1638.9 116L1638.9 154L1636.8 154zM1638.9 43L1642.2 0L1643.6 0L1645.1 43L1645.1 88L1643.6 153L1642.2 153L1638.9 88zM1646.1 31L1649.4 1L1651.3 1L1655.2 31L1655.2 93L1651.3 153L1649.4 153L1646.1 93zM1656.5 50L1658.3 0L1659.7 0L1661.0 50L1661.0 119L1659.7 154L1658.3 154L1656.5 119zM1661.0 98L1662.1 98L1662.1 154L1661.0 154zM1662.1 47L1663.2 0L1664.7 0L1667.7 47L1667.7 92L1664.7 151L1663.2 151L1662.1 92zM1669.2 27L1669.4 3L1670.2 3L1675.4 27L1675.4 96L1670.2 154L1669.4 154L1669.2 96zM1675.4 0L1678.4 0L1678.4 34L1675.4 34zM1678.4 19L1679.6 3L1681.3 3L1682.5 19L1682.5 129L1681.3 154L1679.6 154L1678.4 129zM1682.5 130L1686.0 130L1686.0 154L1682.5 154zM1686.0 50L1686.4 1L1688.9 1L1694.8 50L1694.8 101L1688.9 153L1686.4 153L1686.0 101zM1694.8 0L1698.1 0L1698.1 64L1694.8 64zM1698.1 60L1702.5 0L1703.5 0L1704.6 60L1704.6 111L1703.5 154L1702.5 154L1698.1 111zM1704.6 0L1707.3 0L1707.3 41L1704.6 41zM1707.3 68L1709.6 0L1711.9 0L1715.0 68L1715.0 113L1711.9 154L1709.6 154L1707.3 113zM1716.1 63L1720.3 0L1721.8 0L1725.0 63L1725.0 133L1721.8 154L1720.3 154L1716.1 133zM1726.3 46L1727.8 0L1728.8 0L1730.2 46L1730.2 132L1728.8 154L1727.8 154L1726.3 132zM1730.2 81L1731.8 81L1731.8 154L1730.2 154zM1731.8 40L1734.3 0L1735.9 0L1736.3 40L1736.3 109L1735.9 151L1734.3 151L1731.8 109zM1738.3 37L1742.6 1L1744.8 1L1745.0 37L1745.0 106L1744.8 154L1742.6 154L1738.3 106zM1746.7 55L1748.2 1L1749.5 1L1750.5 55L1750.5 118L1749.5 154L1748.2 154L1746.7 118zM1752.4 56L1754.0 0L1755.4 0L1759.2 56L1759.2 97L1755.4 154L1754.0 154L1752.4 97zM1760.7 64L1762.7 0L1765.1 0L1766.7 64L1766.7 128L1765.1 151L1762.7 151L1760.7 128zM1766.7 0L1770.0 0L1770.0 100L1766.7 100zM1770.0 48L1773.1 1L1774.0 1L1774.9 48L1774.9 127L1774.0 154L1773.1 154L1770.0 127zM1774.9 56L1776.7 56L1776.7 154L1774.9 154zM1776.7 24L1781.1 0L1782.4 0L1783.4 24L1783.4 118L1782.4 154L1781.1 154L1776.7 118zM1784.6 43L1787.4 3L1789.5 3L1794.2 43L1794.2 110L1789.5 154L1787.4 154L1784.6 110zM1795.7 35L1798.2 3L1799.6 3L1805.4 35L1805.4 106L1799.6 151L1798.2 151L1795.7 106zM1806.4 56L1806.7 3L1809.0 3L1810.2 56L1810.2 120L1809.0 154L1806.7 154L1806.4 120zM1810.2 101L1813.5 101L1813.5 154L1810.2 154zM1813.5 46L1814.0 0L1815.5 0L1817.2 46L1817.2 133L1815.5 154L1814.0 154L1813.5 133zM1818.1 31L1818.9 1L1821.4 1L1822.2 31L1822.2 123L1821.4 151L1818.9 151L1818.1 123zM1823.0 54L1823.8 3L1825.7 3L1828.4 54L1828.4 105L1825.7 154L1823.8 154L1823.0 105zM1828.4 0L1830.6 0L1830.6 79L1828.4 79zM1830.6 60L1836.4 0L1837.4 0L1840.0 60L1840.0 129L1837.4 153L1836.4 153L1830.6 129zM1840.0 114L1842.7 114L1842.7 154L1840.0 154zM1842.7 55L1845.1 3L1847.6 3L1852.0 55L1852.0 94L1847.6 154L1845.1 154L1842.7 94zM1852.0 0L1854.0 0L1854.0 49L1852.0 49zM1854.0 62L1854.3 0L1855.7 0L1857.8 62L1857.8 133L1855.7 154L1854.3 154L1854.0 133zM1857.8 49L1860.0 49L1860.0 154L1857.8 154zM1860.0 52L1862.7 1L1864.4 1L1865.6 52L1865.6 89L1864.4 151L1862.7 151L1860.0 89zM1865.6 109L1866.9 109L1866.9 154L1865.6 154zM1866.9 26L1869.0 3L1870.1 3L1874.0 26L1874.0 120L1870.1 151L1869.0 151L1866.9 120zM1874.0 96L1876.1 96L1876.1 154L1874.0 154zM1876.1 23L1876.7 1L1878.2 1L1884.5 23L1884.5 101L1878.2 154L1876.7 154L1876.1 101zM1884.5 81L1886.4 81L1886.4 154L1884.5 154zM1886.4 59L1888.1 3L1889.3 3L1895.8 59L1895.8 125L1889.3 154L1888.1 154L1886.4 125zM1897.8 40L1903.9 0L1905.1 0L1907.2 40L1907.2 112L1905.1 154L1903.9 154L1897.8 112zM1908.1 34L1912.1 1L1913.8 1L1918.0 34L1918.0 130L1913.8 154L1912.1 154L1908.1 130zM1918.0 113L1919.3 113L1919.3 154L1918.0 154zM1919.3 44L1921.8 3L1922.9 3L1923.6 44L1923.6 106L1922.9 154L1921.8 154L1919.3 106zM1923.6 105L1927.0 105L1927.0 154L1923.6 154zM1927.0 54L1932.3 0L1934.6 0L1936.6 54L1936.6 123L1934.6 154L1932.3 154L1927.0 123zM1937.3 29L1938.1 1L1939.3 1L1944.1 29L1944.1 123L1939.3 154L1938.1 154L1937.3 123zM1945.2 43L1948.5 0L1949.6 0L1950.1 43L1950.1 92L1949.6 151L1948.5 151L1945.2 92zM1951.9 56L1953.3 0L1955.2 0L1956.0 56L1956.0 101L1955.2 154L1953.3 154L1951.9 101zM1957.7 45L1959.6 0L1961.6 0L1965.3 45L1965.3 113L1961.6 151L1959.6 151L1957.7 113zM1966.9 19L1973.8 0L1975.6 0L1976.1 19L1976.1 109L1975.6 154L1973.8 154L1966.9 109zM1976.1 94L1977.4 94L1977.4 154L1976.1 154zM1977.4 32L1983.4 0L1984.3 0L1987.3 32L1987.3 92L1984.3 154L1983.4 154L1977.4 92zM1988.7 52L1992.8 0L1994.9 0L1998.6 52L1998.6 92L1994.9 153L1992.8 153L1988.7 92zM1999.6 34L2003.5 1L2004.6 1L2006.2 34L2006.2 112L2004.6 154L2003.5 154L1999.6 112zM2007.0 45L2007.7 0L2009.4 0L2013.5 45L2013.5 86L2009.4 154L2007.7 154L2007.0 86zM2015.1 68L2021.2 0L2023.6 0L2024.6 68L2024.6 87L2023.6 151L2021.2 151L2015.1 87zM2026.1 48L2026.6 3L2029.0 3L2033.9 48L2033.9 106L2029.0 154L2026.6 154L2026.1 106zM2033.9 0L2035.0 0L2035.0 98L2033.9 98zM2035.0 17L2040.1 3L2042.4 3L2044.7 17L2044.7 137L2042.4 151L2040.1 151L2035.0 137zM2044.7 53L2047.4 53L2047.4 154L2044.7 154zM2047.4 27L2050.3 0L2051.5 0L2057.1 27L2057.1 117L2051.5 154L2050.3 154L2047.4 117zM2058.9 18L2060.3 0L2062.4 0L2063.6 18L2063.6 119L2062.4 153L2060.3 153L2058.9 119zM2063.6 81L2067.0 81L2067.0 154L2063.6 154zM2067.0 40L2067.3 3L2069.7 3L2071.4 40L2071.4 127L2069.7 154L2067.3 154L2067.0 127zM2072.9 17L2076.0 0L2076.9 0L2079.9 17L2079.9 122L2076.9 154L2076.0 154L2072.9 122zM2079.9 0L2082.2 0L2082.2 101L2079.9 101zM2082.2 27L2083.1 0L2085.6 0L2087.0 27L2087.0 116L2085.6 154L2083.1 154L2082.2 116zM2087.0 79L2090.4 79L2090.4 154L2087.0 154zM2090.4 58L2092.9 0L2095.0 0L2099.0 58L2099.0 120L2095.0 151L2092.9 151L2090.4 120zM2100.6 60L2102.4 0L2104.1 0L2107.0 60L2107.0 138L2104.1 153L2102.4 153L2100.6 138zM2107.0 0L2108.3 0L2108.3 90L2107.0 90zM2108.3 66L2109.4 0L2111.7 0L2118.0 66L2118.0 120L2111.7 154L2109.4 154L2108.3 120zM2118.9 63L2121.3 0L2123.7 0L2126.7 63L2126.7 99L2123.7 154L2121.3 154L2118.9 99zM2126.7 0L2128.0 0L2128.0 34L2126.7 34zM2128.0 52L2132.0 0L2133.3 0L2136.1 52L2136.1 132L2133.3 151L2132.0 151L2128.0 132zM2137.9 59L2141.2 0L2142.2 0L2144.0 59L2144.0 124L2142.2 154L2141.2 154L2137.9 124zM2144.0 0L2147.4 0L2147.4 29L2144.0 29zM2147.4 67L2149.0 3L2150.0 3L2151.7 67L2151.7 104L2150.0 153L2149.0 153L2147.4 104zM2153.7 18L2157.0 1L2158.6 1L2160.1 18L2160.1 131L2158.6 151L2157.0 151L2153.7 131zM2160.9 25L2160.9 0L2162.1 0L2165.0 25L2165.0 99L2162.1 153L2160.9 153L2160.9 99zM2165.0 101L2167.3 101L2167.3 154L2165.0 154zM2167.3 16L2168.2 3L2169.0 3L2171.6 16L2171.6 122L2169.0 151L2168.2 151L2167.3 122zM2172.9 32L2175.8 1L2178.1 1L2180.2 32L2180.2 119L2178.1 153L2175.8 153L2172.9 119zM2181.5 65L2184.0 0L2186.4 0L2186.9 65L2186.9 126L2186.4 153L2184.0 153L2181.5 126zM2188.8 25L2191.1 0L2192.3 0L2193.9 25L2193.9 100L2192.3 154L2191.1 154L2188.8 100zM2194.7 34L2200.4 3L2202.0 3L2202.5 34L2202.5 108L2202.0 153L2200.4 153L2194.7 108zM2202.5 80L2205.2 80L2205.2 154L2202.5 154zM2205.2 46L2210.0 0L2211.3 0L2214.1 46L2214.1 136L2211.3 154L2210.0 154L2205.2 136zM2214.1 84L2215.8 84L2215.8 154L2214.1 154zM2215.8 28L2217.4 3L2219.6 3L2224.4 28L2224.4 94L2219.6 154L2217.4 154L2215.8 94zM2225.8 42L2232.8 3L2234.1 3L2235.4 42L2235.4 113L2234.1 151L2232.8 151L2225.8 113zM2236.4 60L2238.3 0L2240.7 0L2240.9 60L2240.9 95L2240.7 154L2238.3 154L2236.4 95zM2240.9 0L2243.9 0L2243.9 93L2240.9 93zM2243.9 29L2246.1 0L2246.9 0L2249.0 29L2249.0 89L2246.9 153L2246.1 153L2243.9 89zM2249.0 0L2251.5 0L2251.5 31L2249.0 31zM2251.5 19L2257.9 1L2258.9 1L2259.1 19L2259.1 103L2258.9 154L2257.9 154L2251.5 103zM2260.5 29L2265.4 0L2267.3 0L2269.0 29L2269.0 100L2267.3 153L2265.4 153L2260.5 100zM2269.0 0L2271.9 0L2271.9 41L2269.0 41zM2271.9 66L2273.9 0L2275.6 0L2278.9 66L2278.9 104L2275.6 154L2273.9 154L2271.9 104zM2279.8 28L2284.3 3L2286.4 3L2288.4 28L2288.4 103L2286.4 153L2284.3 153L2279.8 103zM2289.4 50L2290.0 0L2292.4 0L2293.7 50L2293.7 102L2292.4 154L2290.0 154L2289.4 102zM2295.7 67L2297.3 3L2298.7 3L2303.0 67L2303.0 97L2298.7 153L2297.3 153L2295.7 97zM2303.8 18L2305.6 3L2307.3 3L2311.8 18L2311.8 98L2307.3 154L2305.6 154L2303.8 98zM2312.9 18L2314.6 3L2316.3 3L2316.4 18L2316.4 119L2316.3 153L2314.6 153L2312.9 119zM2318.3 65L2319.3 1L2320.8 1L2322.0 65L2322.0 134L2320.8 151L2319.3 151L2318.3 134z" fill="#ffff00"/><polyline points="128,77 131,104 139,145" fill="none" stroke="#ffff00" stroke-width="2"/><polyline points="2322,145 2327,123 2333,81 2338,77" fill="none" stroke="#ffff00" stroke-width="2"/></svg></div>
<div class="t" style="left:57.1px;top:1283.3px;font-size:25px;line-height:25px;color:#9c9c9c;letter-spacing:0.58px;">1.000</div>
<div class="t" style="left:55.3px;top:1311.1px;font-size:25px;line-height:25px;color:#9c9c9c;letter-spacing:1.02px;">0.500</div>
<div class="t" style="left:55.3px;top:1348.6px;font-size:25px;line-height:25px;color:#9c9c9c;letter-spacing:1.02px;">0.000</div>
<div class="t" style="left:44.9px;top:1387.5px;font-size:25px;line-height:25px;color:#9c9c9c;letter-spacing:1.24px;">-0.500</div>
<div class="t" style="left:50.6px;top:1416.8px;font-size:25px;line-height:25px;color:#9c9c9c;letter-spacing:0.10px;">-1.000</div>
<div class="t" style="left:121.0px;top:1445.8px;font-size:25px;line-height:25px;color:#9c9c9c;letter-spacing:0.00px;">0</div>
<div class="t" style="left:318.6px;top:1445.8px;font-size:25px;line-height:25px;color:#9c9c9c;letter-spacing:-0.47px;">699.1</div>
<div class="t" style="left:542.9px;top:1445.8px;font-size:25px;line-height:25px;color:#9c9c9c;letter-spacing:-0.48px;">1.4 k</div>
<div class="t" style="left:764.5px;top:1445.8px;font-size:25px;line-height:25px;color:#9c9c9c;letter-spacing:-0.64px;">2.1 k</div>
<div class="t" style="left:985.5px;top:1445.8px;font-size:25px;line-height:25px;color:#9c9c9c;letter-spacing:-0.64px;">2.8 k</div>
<div class="t" style="left:1206.8px;top:1445.8px;font-size:25px;line-height:25px;color:#9c9c9c;letter-spacing:-0.72px;">3.5 k</div>
<div class="t" style="left:1421.7px;top:1445.8px;font-size:25px;line-height:25px;color:#9c9c9c;letter-spacing:-0.84px;">4.19 k</div>
<div class="t" style="left:1642.7px;top:1445.8px;font-size:25px;line-height:25px;color:#9c9c9c;letter-spacing:-0.84px;">4.89 k</div>
<div class="t" style="left:1863.3px;top:1445.8px;font-size:25px;line-height:25px;color:#9c9c9c;letter-spacing:-0.76px;">5.59 k</div>
<div class="t" style="left:2084.1px;top:1445.8px;font-size:25px;line-height:25px;color:#9c9c9c;letter-spacing:-0.70px;">6.29 k</div>
<div class="t" style="left:2305.1px;top:1445.8px;font-size:25px;line-height:25px;color:#9c9c9c;letter-spacing:-0.70px;">6.99 k</div>
<svg width="30" height="30" style="left:0;top:1348px"><ellipse cx="13.5" cy="14.5" rx="8.3" ry="7.6" fill="none" stroke="#9c9c9c" stroke-width="2.2"/><path d="M21.6 5 L21.6 16" stroke="#9c9c9c" stroke-width="2.2"/></svg>
<div class="r" style="left:0px;top:1473px;width:2400px;height:7px;background:#1c1c20;"></div>
</body></html>
